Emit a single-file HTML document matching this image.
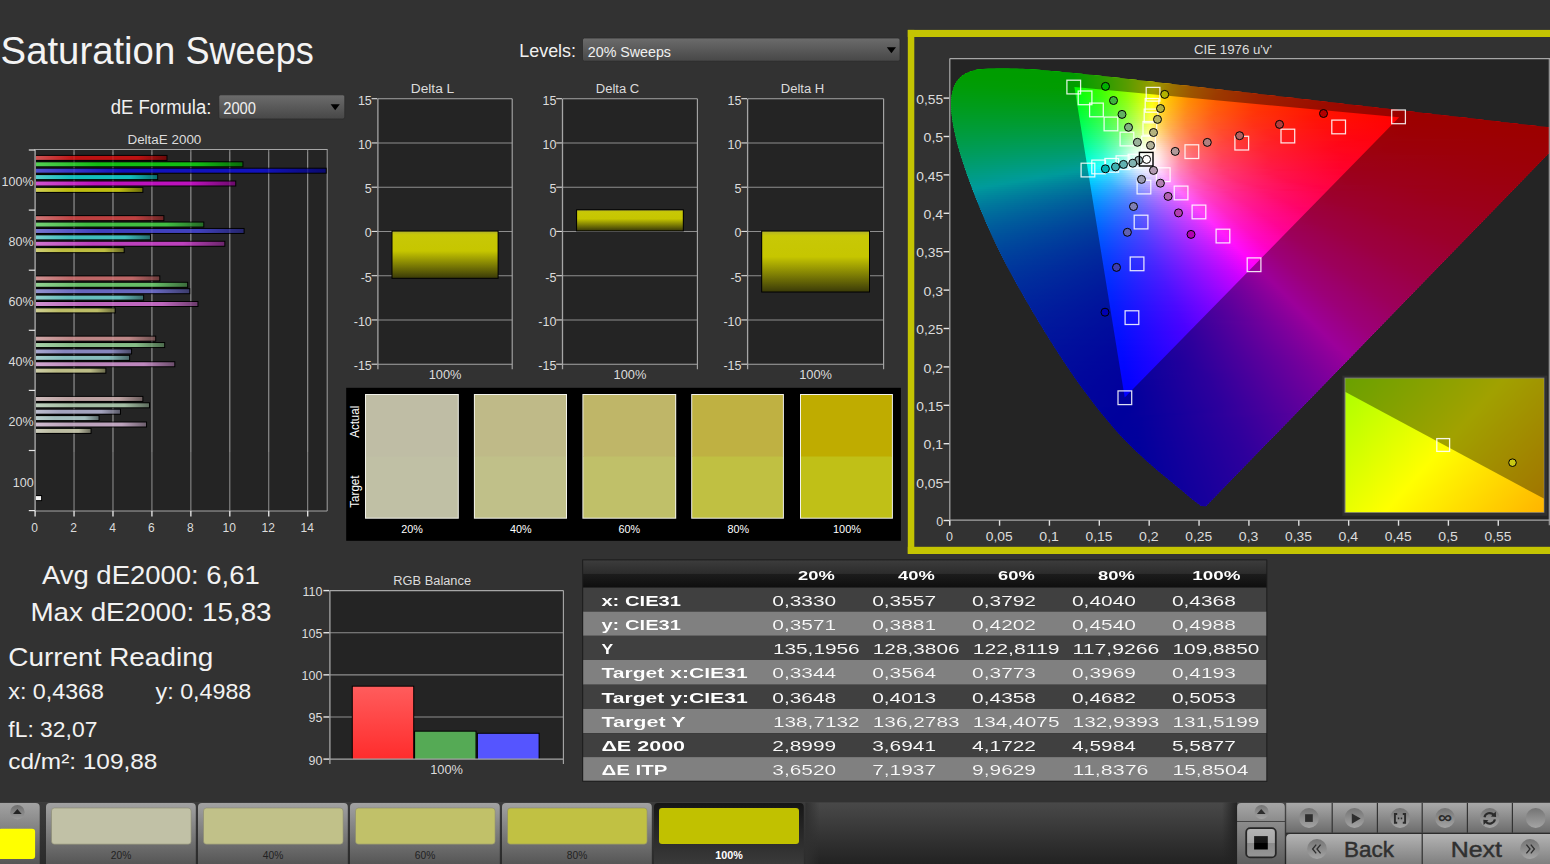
<!DOCTYPE html>
<html><head><meta charset="utf-8"><title>Saturation Sweeps</title>
<style>
html,body{margin:0;padding:0;background:#323232}
body{width:1550px;height:864px;overflow:hidden;position:relative;font-family:"Liberation Sans", sans-serif}
#plot{position:absolute;left:950px;top:59px;width:600px;height:461px;background:#242424;overflow:hidden}
#locus{position:absolute;left:0;top:0;width:100%;height:100%;clip-path:polygon(255.8px 447.2px,251.3px 446.9px,245.2px 442.5px,242.3px 440.3px,240.1px 438.4px,237.8px 436.4px,235.2px 434.2px,232.3px 431.8px,229.2px 429.2px,225.7px 426.4px,221.8px 423.1px,219.7px 421.4px,217.5px 419.6px,215.2px 417.7px,212.8px 415.8px,210.4px 413.8px,207.9px 411.7px,205.3px 409.4px,202.5px 407.1px,199.6px 404.6px,196.6px 401.9px,193.5px 399.1px,190.3px 396.1px,186.9px 393.0px,183.5px 389.8px,180.0px 386.3px,176.3px 382.6px,172.4px 378.5px,168.2px 373.9px,163.8px 368.9px,159.0px 363.3px,154.0px 357.3px,148.8px 350.9px,143.4px 343.9px,137.8px 336.6px,132.1px 328.9px,126.2px 320.7px,120.2px 312.0px,114.1px 302.9px,107.9px 293.4px,101.5px 283.5px,95.1px 273.2px,88.7px 262.7px,82.3px 251.9px,75.9px 241.0px,69.6px 230.0px,63.4px 218.9px,57.4px 207.8px,51.7px 196.7px,46.3px 185.7px,41.2px 174.9px,36.4px 164.2px,32.0px 153.8px,27.8px 143.7px,23.9px 134.0px,20.4px 124.6px,17.1px 115.6px,14.2px 107.1px,11.6px 99.1px,9.3px 91.5px,7.3px 84.4px,5.7px 77.8px,4.3px 71.6px,3.2px 65.9px,2.3px 60.5px,1.7px 55.6px,1.3px 51.0px,1.1px 46.7px,1.1px 42.8px,1.4px 39.1px,1.8px 35.6px,2.5px 32.5px,3.3px 29.6px,4.3px 26.9px,5.5px 24.4px,6.9px 22.2px,8.4px 20.2px,12.0px 16.8px,16.0px 14.2px,20.4px 12.4px,25.2px 11.1px,27.7px 10.6px,30.3px 10.2px,32.9px 10.0px,35.6px 9.7px,38.4px 9.6px,41.1px 9.4px,44.0px 9.4px,46.8px 9.3px,49.6px 9.3px,52.5px 9.3px,55.3px 9.3px,58.1px 9.3px,61.0px 9.4px,63.9px 9.5px,66.8px 9.5px,69.7px 9.7px,72.7px 9.8px,75.7px 10.0px,78.7px 10.1px,81.8px 10.3px,85.0px 10.6px,88.2px 10.8px,91.4px 11.0px,94.7px 11.3px,98.1px 11.6px,101.5px 11.9px,105.0px 12.2px,108.5px 12.5px,112.1px 12.9px,115.8px 13.2px,119.5px 13.6px,123.3px 14.0px,127.2px 14.4px,131.2px 14.8px,135.3px 15.2px,139.4px 15.7px,143.7px 16.1px,148.0px 16.6px,152.4px 17.1px,156.9px 17.6px,161.5px 18.1px,166.2px 18.6px,170.9px 19.1px,175.8px 19.7px,180.8px 20.3px,185.9px 20.8px,191.1px 21.4px,196.4px 22.0px,201.8px 22.6px,207.3px 23.3px,212.9px 23.9px,218.6px 24.6px,224.4px 25.2px,230.3px 25.9px,236.3px 26.6px,242.4px 27.3px,248.6px 28.0px,254.9px 28.7px,261.4px 29.5px,267.9px 30.2px,274.5px 31.0px,281.2px 31.8px,288.0px 32.6px,294.9px 33.3px,301.8px 34.1px,308.9px 34.9px,316.0px 35.8px,323.1px 36.6px,330.4px 37.4px,337.6px 38.3px,345.0px 39.1px,352.3px 39.9px,359.6px 40.8px,366.8px 41.6px,374.0px 42.5px,381.1px 43.3px,388.1px 44.1px,395.1px 44.9px,402.1px 45.7px,409.1px 46.5px,416.1px 47.3px,423.0px 48.1px,429.8px 48.9px,436.5px 49.6px,443.0px 50.4px,449.4px 51.1px,455.6px 51.8px,461.7px 52.5px,467.7px 53.2px,473.5px 53.9px,479.1px 54.5px,484.6px 55.2px,490.0px 55.8px,495.2px 56.4px,500.2px 57.0px,505.0px 57.5px,509.7px 58.1px,514.2px 58.6px,518.6px 59.1px,522.8px 59.6px,526.9px 60.0px,530.8px 60.5px,534.6px 60.9px,538.2px 61.3px,541.7px 61.7px,545.1px 62.1px,548.4px 62.5px,551.6px 62.9px,554.8px 63.2px,557.8px 63.6px,560.7px 63.9px,563.6px 64.3px,566.4px 64.6px,569.1px 64.9px,571.7px 65.2px,574.2px 65.5px,579.0px 66.0px,583.4px 66.5px,587.4px 67.0px,591.0px 67.4px,594.3px 67.8px,597.3px 68.1px,599.9px 68.4px,603.5px 68.8px,606.5px 69.2px,609.0px 69.5px,618.0px 70.5px,621.5px 70.9px)}
#locus i{position:absolute;left:0;width:100%;height:2.5px;display:block}
#ov{position:absolute;left:0;top:0}
#ov text{font-family:"Liberation Sans", sans-serif;white-space:pre}
</style></head><body>
<div id="plot"><div id="locus">
<i style="top:0px;background:linear-gradient(90deg,#00ff00 0px,#03ff00 122px,#3dff00 149px,#93ff00 178px,#f9ff00 205px,#fff400 209px,#ffb900 227px,#ff8500 251px,#ff5700 285px,#ff3000 336px,#ff1000 417px,#ff0000 519px,#ff0000 600px)"></i>
<i style="top:2px;background:linear-gradient(90deg,#00ff00 0px,#02ff00 122px,#3aff00 148px,#90ff00 177px,#f6ff00 204px,#fffb00 207px,#ffc000 224px,#ff8b00 247px,#ff5d00 279px,#ff3500 327px,#ff1400 402px,#ff0000 509px,#ff0000 600px)"></i>
<i style="top:4px;background:linear-gradient(90deg,#00ff00 0px,#02ff00 122px,#3aff00 148px,#90ff00 177px,#f7ff00 204px,#fffb00 207px,#ffbf00 224px,#ff8b00 247px,#ff5c00 279px,#ff3400 327px,#ff1400 402px,#ff0000 508px,#ff0000 600px)"></i>
<i style="top:6px;background:linear-gradient(90deg,#00ff00 0px,#03ff00 123px,#3cff00 149px,#94ff00 178px,#fffe00 206px,#ffc200 223px,#ff8c00 246px,#ff5d00 278px,#ff3500 325px,#ff1400 399px,#ff0000 505px,#ff0000 600px)"></i>
<i style="top:8px;background:linear-gradient(90deg,#00ff00 0px,#02ff00 123px,#3cff00 149px,#94ff00 178px,#fffd00 206px,#ffc100 223px,#ff8b00 246px,#ff5c00 278px,#ff3400 325px,#ff1400 399px,#ff0000 504px,#ff0000 600px)"></i>
<i style="top:10px;background:linear-gradient(90deg,#00ff00 0px,#02ff00 123px,#39ff00 148px,#90ff00 177px,#f5ff00 203px,#fffc00 206px,#ffc300 222px,#ff8e00 244px,#ff5f00 275px,#ff3600 321px,#ff1500 393px,#ff0000 499px,#ff0000 600px)"></i>
<i style="top:12px;background:linear-gradient(90deg,#00ff00 0px,#03ff00 124px,#3eff00 150px,#94ff00 178px,#faff00 204px,#fff700 207px,#ffbc00 224px,#ff8700 247px,#ff5a00 279px,#ff3200 327px,#ff1200 403px,#ff0000 504px,#ff0000 600px)"></i>
<i style="top:14px;background:linear-gradient(90deg,#00ff00 0px,#02ff00 124px,#3bff00 149px,#90ff00 177px,#f6ff00 203px,#fffb00 206px,#ffc100 222px,#ff8c00 244px,#ff5d00 275px,#ff3500 321px,#ff1400 393px,#ff0000 497px,#ff0000 600px)"></i>
<i style="top:16px;background:linear-gradient(90deg,#00ff01 0px,#02ff00 124px,#3aff00 149px,#90ff00 177px,#f7ff00 203px,#fffa00 206px,#ffc000 222px,#ff8b00 244px,#ff5d00 275px,#ff3500 321px,#ff1400 393px,#ff0000 496px,#ff0000 600px)"></i>
<i style="top:18px;background:linear-gradient(90deg,#00ff03 0px,#01ff00 124px,#37ff00 148px,#8dff00 176px,#f3ff00 202px,#fffd00 205px,#ffc200 221px,#ff8c00 243px,#ff5d00 274px,#ff3500 319px,#ff1400 390px,#ff0000 493px,#ff0000 600px)"></i>
<i style="top:20px;background:linear-gradient(90deg,#00ff05 0px,#00ff00 119px,#04ff00 126px,#3fff00 151px,#98ff00 179px,#fffd00 205px,#ffc100 221px,#ff8c00 243px,#ff5c00 274px,#ff3500 319px,#ff1400 390px,#ff0000 491px,#ff0000 600px)"></i>
<i style="top:22px;background:linear-gradient(90deg,#00ff08 0px,#00ff00 116px,#04ff00 126px,#3eff00 151px,#94ff00 178px,#f9ff00 203px,#fff700 206px,#ffbd00 222px,#ff8900 244px,#ff5b00 275px,#ff3300 321px,#ff1200 394px,#ff0000 492px,#ff0000 600px)"></i>
<i style="top:24px;background:linear-gradient(90deg,#00ff0b 0px,#02ff00 125px,#38ff00 149px,#8dff00 176px,#f1ff00 201px,#ffff00 204px,#ffc300 220px,#ff8e00 241px,#ff5f00 271px,#ff3600 315px,#ff1500 384px,#ff0000 486px,#ff0000 600px)"></i>
<i style="top:26px;background:linear-gradient(90deg,#00ff0d 0px,#03ff00 126px,#3bff00 150px,#91ff00 177px,#f6ff00 202px,#fffa00 205px,#ffbf00 221px,#ff8900 243px,#ff5a00 274px,#ff3200 320px,#ff1200 392px,#ff0000 489px,#ff0000 600px)"></i>
<i style="top:28px;background:linear-gradient(90deg,#00ff10 0px,#02ff01 126px,#3aff00 150px,#91ff00 177px,#f7ff00 202px,#fff900 205px,#ffbe00 221px,#ff8800 243px,#ff5a00 274px,#ff3200 320px,#ff1200 392px,#ff0000 488px,#ff0000 600px)"></i>
<i style="top:30px;background:linear-gradient(90deg,#00ff13 0px,#02ff04 126px,#3aff01 150px,#91ff00 177px,#f3ff00 201px,#fffd00 204px,#ffc300 219px,#ff8d00 240px,#ff5f00 269px,#ff3600 312px,#ff1500 379px,#ff0000 479px,#ff0000 600px)"></i>
<i style="top:32px;background:linear-gradient(90deg,#00ff16 0px,#03ff08 127px,#3cff04 151px,#94ff00 178px,#f9ff00 202px,#fff700 205px,#ffbc00 221px,#ff8700 243px,#ff5800 274px,#ff3000 320px,#ff1000 393px,#ff0000 485px,#ff0000 600px)"></i>
<i style="top:34px;background:linear-gradient(90deg,#00ff19 0px,#02ff0c 127px,#3cff08 151px,#91ff04 177px,#f5ff00 201px,#fffb00 204px,#ffc100 219px,#ff8c00 240px,#ff5d00 269px,#ff3500 312px,#ff1400 380px,#ff0000 477px,#ff0000 600px)"></i>
<i style="top:36px;background:linear-gradient(90deg,#00ff1d 0px,#02ff10 127px,#38ff0c 150px,#8dff08 176px,#f1ff04 200px,#ffff03 203px,#ffc400 218px,#ff8f00 238px,#ff6000 266px,#ff3700 308px,#ff1600 373px,#ff0000 472px,#ff0000 600px)"></i>
<i style="top:38px;background:linear-gradient(90deg,#00ff20 0px,#03ff14 128px,#3eff10 152px,#95ff0c 178px,#fffe08 203px,#ffc304 218px,#ff8e00 238px,#ff5f00 266px,#ff3700 308px,#ff1600 373px,#ff0000 471px,#ff0000 600px)"></i>
<i style="top:40px;background:linear-gradient(90deg,#00ff23 0px,#02ff18 128px,#3aff15 151px,#91ff11 177px,#fffd0d 203px,#ffc208 218px,#ff8d03 238px,#ff5f00 266px,#ff3600 308px,#ff1500 374px,#ff0000 470px,#ff0000 600px)"></i>
<i style="top:42px;background:linear-gradient(90deg,#00ff26 0px,#02ff1c 128px,#3aff1a 151px,#91ff16 177px,#fffc12 203px,#ffc10c 218px,#ff8c06 238px,#ff5e02 266px,#ff3500 308px,#ff1400 374px,#ff0000 469px,#ff0000 600px)"></i>
<i style="top:44px;background:linear-gradient(90deg,#00ff2a 0px,#03ff21 129px,#3cff1e 152px,#91ff1c 177px,#f4ff18 200px,#fffb18 203px,#ffc010 218px,#ff8b0a 238px,#ff5d04 266px,#ff3500 308px,#ff1400 374px,#ff0000 468px,#ff0000 600px)"></i>
<i style="top:46px;background:linear-gradient(90deg,#00ff2d 0px,#02ff26 129px,#3cff23 152px,#91ff21 177px,#f5ff1e 200px,#ffff1e 202px,#ffc215 217px,#ff8d0d 237px,#ff5e07 265px,#ff3602 306px,#ff1400 371px,#ff0000 465px,#ff0000 600px)"></i>
<i style="top:48px;background:linear-gradient(90deg,#00ff31 0px,#02ff2a 129px,#39ff29 151px,#8dff27 176px,#f1ff25 199px,#fffe24 202px,#ffc51a 216px,#ff9012 235px,#ff610a 262px,#ff3804 302px,#ff1700 364px,#ff0000 459px,#ff0000 600px)"></i>
<i style="top:50px;background:linear-gradient(90deg,#00ff35 0px,#01ff2f 129px,#38ff2e 151px,#8eff2c 176px,#f2ff2b 199px,#fffd2a 202px,#ffc41f 216px,#ff8f16 235px,#ff600d 262px,#ff3706 302px,#ff1600 364px,#ff0000 458px,#ff0000 600px)"></i>
<i style="top:52px;background:linear-gradient(90deg,#00ff38 0px,#03ff34 130px,#3bff33 152px,#92ff32 177px,#f8ff32 200px,#fff730 203px,#ffbc23 218px,#ff8818 238px,#ff5a0f 266px,#ff3207 308px,#ff1201 374px,#ff0000 463px,#ff0000 600px)"></i>
<i style="top:54px;background:linear-gradient(90deg,#00ff3c 0px,#02ff39 130px,#3aff39 152px,#8eff39 176px,#f4ff39 199px,#fffb38 202px,#ffbe29 217px,#ff891d 237px,#ff5a12 265px,#ff3309 306px,#ff1302 371px,#ff0000 460px,#ff0000 600px)"></i>
<i style="top:56px;background:linear-gradient(90deg,#00ff40 0px,#01ff3f 130px,#37ff3f 151px,#8aff3f 175px,#f5ff40 199px,#ffff40 201px,#ffc130 216px,#ff8c22 235px,#ff5d16 262px,#ff350c 302px,#ff1404 365px,#ff0000 455px,#ff0000 600px)"></i>
<i style="top:58px;background:linear-gradient(90deg,#00ff44 0px,#03ff44 131px,#3cff44 153px,#92ff46 177px,#fffe48 201px,#ffc336 215px,#ff8e27 234px,#ff5f1a 260px,#ff370f 299px,#ff1606 360px,#ff0000 451px,#ff0000 600px)"></i>
<i style="top:60px;background:linear-gradient(90deg,#00ff48 0px,#02ff4a 131px,#39ff4a 152px,#8bff4d 175px,#fffd50 201px,#ffbf3b 216px,#ff8a2a 235px,#ff5c1c 262px,#ff3411 302px,#ff1307 365px,#ff0001 453px,#ff0000 600px)"></i>
<i style="top:62px;background:linear-gradient(90deg,#00ff4c 0px,#02ff4f 131px,#38ff50 152px,#8bff54 175px,#fffd59 201px,#ffbf42 216px,#ff8a2f 235px,#ff5b20 262px,#ff3313 302px,#ff1309 365px,#ff0002 451px,#ff0000 600px)"></i>
<i style="top:64px;background:linear-gradient(90deg,#00ff50 0px,#03ff55 132px,#3bff57 153px,#8cff5b 175px,#fdff63 200px,#ffb746 218px,#ff8432 237px,#ff5722 264px,#ff3015 305px,#ff110a 370px,#ff0003 453px,#ff0000 600px)"></i>
<i style="top:66px;background:linear-gradient(90deg,#00ff54 0px,#02ff5b 132px,#3aff5d 153px,#88ff63 174px,#feff6d 200px,#ffba4e 217px,#ff8537 236px,#ff5826 263px,#ff3017 304px,#ff110c 368px,#ff0004 450px,#ff0000 600px)"></i>
<i style="top:68px;background:linear-gradient(90deg,#00ff58 0px,#02ff61 132px,#37ff64 152px,#85ff6a 173px,#ffff78 200px,#ffba55 217px,#ff853c 236px,#ff5729 263px,#ff301a 304px,#ff100d 369px,#ff0005 450px,#ff0000 600px)"></i>
<i style="top:70px;background:linear-gradient(90deg,#00ff5c 0px,#03ff68 133px,#39ff6b 153px,#86ff72 173px,#fbff83 199px,#ffec7a 204px,#ffa652 223px,#ff773b 242px,#ff4b28 272px,#ff2619 318px,#ff090c 392px,#ff0006 459px,#ff0000 600px)"></i>
<i style="top:72px;background:linear-gradient(90deg,#00ff60 0px,#02ff6e 133px,#39ff71 153px,#82ff7a 172px,#f8ff8f 198px,#fff98c 201px,#ffa95a 222px,#ff7840 241px,#ff4d2d 270px,#ff271c 315px,#ff0a0e 387px,#ff0007 455px,#ff0000 600px)"></i>
<i style="top:74px;background:linear-gradient(90deg,#00ff65 0px,#02ff74 133px,#35ff78 152px,#7bff81 170px,#f5ff9b 197px,#fffc9a 200px,#ffa25d 224px,#ff7644 242px,#ff4b2f 271px,#ff261e 316px,#ff090f 389px,#ff0008 455px,#ff0001 600px)"></i>
<i style="top:76px;background:linear-gradient(90deg,#00ff69 0px,#01ff7b 133px,#35ff7f 152px,#77ff88 169px,#eaffa7 194px,#fffca6 200px,#ff9c5f 226px,#ff7146 244px,#ff4731 274px,#ff221f 321px,#ff0610 397px,#ff0009 462px,#ff0001 600px)"></i>
<i style="top:78px;background:linear-gradient(90deg,#00ff6e 0px,#02ff82 134px,#38ff87 153px,#78ff91 169px,#e0ffb0 191px,#ffffb5 199px,#ff9964 227px,#ff6e4a 245px,#ff4433 276px,#ff2020 324px,#ff0510 402px,#ff0009 475px,#ff0002 600px)"></i>
<i style="top:80px;background:linear-gradient(90deg,#00ff72 0px,#02ff89 134px,#34ff8e 152px,#75ff98 168px,#dbffba 189px,#fffec1 199px,#ffc48f 215px,#ff9266 229px,#ff6a4c 247px,#ff4035 279px,#ff1d21 329px,#ff0311 410px,#ff0003 600px)"></i>
<i style="top:82px;background:linear-gradient(90deg,#00ff77 0px,#01ff90 134px,#34ff95 152px,#71ffa0 167px,#dbffc4 188px,#fffecc 199px,#ffd1a3 212px,#ff9871 227px,#ff7055 243px,#ff463c 272px,#ff2227 318px,#ff0615 392px,#ff000d 455px,#ff0003 600px)"></i>
<i style="top:84px;background:linear-gradient(90deg,#00ff7b 0px,#03ff97 135px,#37ff9e 153px,#72ffa8 167px,#d6ffcb 186px,#feffd8 198px,#ffe2bd 208px,#ff9877 227px,#ff715b 242px,#ff4841 270px,#ff232a 315px,#ff0717 388px,#ff000f 450px,#ff0004 600px)"></i>
<i style="top:86px;background:linear-gradient(90deg,#00ff80 0px,#00ff9e 134px,#2fffa5 151px,#69ffae 165px,#d5ffd2 185px,#f7ffe0 195px,#fffbde 200px,#ffd9bb 211px,#ff987e 227px,#ff7060 242px,#ff4745 270px,#ff232d 315px,#ff0619 388px,#ff0010 450px,#ff0005 600px)"></i>
<i style="top:88px;background:linear-gradient(90deg,#00ff85 0px,#00ffa4 130px,#03ffa6 136px,#36ffad 153px,#6fffb8 166px,#d9ffdb 185px,#f6ffe8 194px,#fffbe6 200px,#ffdfc8 210px,#ff9884 227px,#ff7166 241px,#ff4a4b 267px,#ff2531 310px,#ff081c 380px,#ff0012 442px,#ff0006 600px)"></i>
<i style="top:90px;background:linear-gradient(90deg,#00ff8a 0px,#00ffaa 126px,#03ffae 136px,#35ffb6 153px,#70ffc1 166px,#d8ffe1 184px,#f6ffee 193px,#fffbed 200px,#ffe0d0 210px,#ff988b 227px,#ff706b 241px,#ff494e 267px,#ff2434 310px,#ff081e 380px,#ff0014 441px,#ff0006 600px)"></i>
<i style="top:92px;background:linear-gradient(90deg,#00ff8e 0px,#00ffb0 122px,#02ffb5 136px,#31ffbd 152px,#6bffc8 165px,#dbffe8 184px,#f6fff3 192px,#fffcf2 200px,#ffe6db 209px,#ff948e 228px,#ff6d6e 242px,#ff4650 269px,#ff2135 314px,#ff061e 386px,#ff0014 448px,#ff0007 600px)"></i>
<i style="top:94px;background:linear-gradient(90deg,#00ff93 0px,#00ffb6 118px,#01ffbd 136px,#31ffc6 152px,#66ffcf 164px,#ddffee 184px,#f7fff7 192px,#fffcf6 200px,#ffe7e1 209px,#ff9091 229px,#ff6b72 243px,#ff4352 271px,#ff1f36 317px,#ff041f 391px,#ff0012 476px,#ff0008 600px)"></i>
<i style="top:96px;background:linear-gradient(90deg,#00ff98 0px,#00ffbc 115px,#03ffc6 137px,#34ffcf 153px,#6cffd9 165px,#dafff1 183px,#f4fff9 190px,#fffcf9 200px,#ffe8e5 209px,#ff8c93 230px,#ff6875 244px,#ff4054 273px,#ff1d37 320px,#ff0320 396px,#ff000b 570px,#ff0009 600px)"></i>
<i style="top:98px;background:linear-gradient(90deg,#00ff9e 0px,#00ffc2 112px,#02ffce 137px,#33ffd8 153px,#6cffe2 165px,#dbfff6 183px,#f5fffc 190px,#fffcfc 200px,#ffe8e9 209px,#ff8b99 230px,#ff677a 244px,#ff4059 272px,#ff1d3a 319px,#ff0322 394px,#ff000c 561px,#ff0009 600px)"></i>
<i style="top:100px;background:linear-gradient(90deg,#00ffa3 0px,#00ffc8 109px,#02ffd6 137px,#2fffe0 152px,#66ffea 164px,#dbfffb 183px,#f5fffe 190px,#fffcfd 200px,#ffe8ed 209px,#ff8a9e 230px,#ff667f 244px,#ff3f5d 272px,#ff1c3d 319px,#ff0223 394px,#ff000d 557px,#ff000a 600px)"></i>
<i style="top:102px;background:linear-gradient(90deg,#00ffa8 0px,#00ffce 106px,#03ffe0 138px,#32ffea 153px,#6bfff3 165px,#dafeff 183px,#f5fdff 191px,#fff9fd 202px,#ffdfe9 211px,#ff89a4 230px,#ff6584 244px,#ff3d5f 273px,#ff1b3f 320px,#ff0225 396px,#ff000e 557px,#ff000b 600px)"></i>
<i style="top:104px;background:linear-gradient(90deg,#00ffad 0px,#00ffd4 103px,#02ffe8 138px,#31fff3 153px,#6afffd 165px,#daf9ff 184px,#f4faff 192px,#fff6fe 203px,#ffd9e9 212px,#ff8bac 229px,#ff658b 243px,#ff3e65 271px,#ff1c43 317px,#ff0228 391px,#ff0010 543px,#ff000c 600px)"></i>
<i style="top:106px;background:linear-gradient(90deg,#00ffb3 0px,#00ffdb 101px,#02fff1 138px,#31fffc 153px,#6cf8ff 166px,#d5f4ff 184px,#f0f7ff 192px,#fff2ff 204px,#ffcde6 214px,#ff8ab2 229px,#ff6490 243px,#ff3d69 271px,#ff1b46 317px,#ff0229 391px,#ff0012 539px,#ff000d 600px)"></i>
<i style="top:108px;background:linear-gradient(90deg,#00ffb8 0px,#00ffe1 98px,#01fffa 138px,#36f7ff 155px,#72eeff 168px,#d3efff 185px,#edf2ff 193px,#feecff 205px,#ffcaea 214px,#ff88b7 229px,#ff6395 243px,#ff3d6d 271px,#ff1a49 317px,#ff012b 391px,#ff0013 536px,#ff000e 600px)"></i>
<i style="top:110px;background:linear-gradient(90deg,#00ffbe 0px,#00ffe7 96px,#00fcff 136px,#07f8ff 141px,#3febff 158px,#7ee5ff 171px,#d1e9ff 186px,#ebedff 195px,#fde2ff 207px,#ffb9e5 217px,#ff80b7 231px,#ff5b93 247px,#ff356a 278px,#ff1445 328px,#ff002a 401px,#ff0012 553px,#ff000e 600px)"></i>
<i style="top:112px;background:linear-gradient(90deg,#00ffc3 0px,#00ffed 93px,#00fcff 124px,#02f1ff 139px,#34e4ff 156px,#6edeff 169px,#c9e3ff 186px,#e5e7ff 195px,#f8dbff 207px,#ffd0fc 211px,#ff84c2 229px,#ff5f9d 244px,#ff3973 273px,#ff184d 319px,#ff002e 394px,#ff0015 536px,#ff000f 600px)"></i>
<i style="top:114px;background:linear-gradient(90deg,#00ffc9 0px,#00fff4 91px,#00fcff 113px,#03e8ff 140px,#39dbff 158px,#78d5ff 172px,#c4dcff 187px,#e2deff 197px,#f7ceff 209px,#ffc3fc 213px,#ff82c8 229px,#ff5ca1 245px,#ff3775 274px,#ff1750 319px,#ff0030 393px,#ff0017 531px,#ff0010 600px)"></i>
<i style="top:116px;background:linear-gradient(90deg,#00ffcf 0px,#00fffa 89px,#00f7ff 107px,#02e0ff 140px,#36d3ff 158px,#77ceff 173px,#bfd5ff 188px,#ded5ff 199px,#fcbdff 213px,#ff7ac8 231px,#ff559e 249px,#ff3173 280px,#ff134d 328px,#ff0031 397px,#ff0017 536px,#ff0011 600px)"></i>
<i style="top:118px;background:linear-gradient(90deg,#00ffd4 0px,#00fcff 88px,#02d9ff 140px,#37cbff 159px,#76c7ff 174px,#bacdff 189px,#dcc8ff 202px,#ffaeff 216px,#ff79ce 231px,#ff52a1 250px,#ff2f75 281px,#ff124f 329px,#ff0032 397px,#ff0019 533px,#ff0012 600px)"></i>
<i style="top:120px;background:linear-gradient(90deg,#00ffda 0px,#00fcff 77px,#03d1ff 141px,#38c4ff 160px,#7dc0ff 177px,#bbc4ff 192px,#dbbbff 205px,#ffa2ff 218px,#ff72ce 233px,#ff4b9f 254px,#ff2a74 286px,#ff0e4e 336px,#ff0034 399px,#ff001a 534px,#ff0013 600px)"></i>
<i style="top:122px;background:linear-gradient(90deg,#00ffe0 0px,#00fcff 65px,#02caff 141px,#38bdff 161px,#88b9ff 181px,#bbbbff 195px,#e0a9ff 210px,#ff98ff 220px,#ff6bcf 235px,#ff469f 257px,#ff2673 290px,#ff0c4d 341px,#ff0035 400px,#ff001b 534px,#ff0014 600px)"></i>
<i style="top:124px;background:linear-gradient(90deg,#00ffe6 0px,#00fcff 53px,#02c3ff 141px,#36b6ff 161px,#9cb2ff 188px,#caaaff 204px,#ff8eff 222px,#ff64cd 238px,#ff3f9b 262px,#ff2170 297px,#ff084b 351px,#ff0036 404px,#ff001b 539px,#ff0015 600px)"></i>
<i style="top:126px;background:linear-gradient(90deg,#00ffec 0px,#00fcff 41px,#03bcff 142px,#39afff 163px,#ada8ff 196px,#f589ff 221px,#ff82fb 225px,#ff59c6 243px,#ff3795 269px,#ff1a6a 307px,#ff0346 366px,#ff0028 466px,#ff0015 600px)"></i>
<i style="top:128px;background:linear-gradient(90deg,#00fff3 0px,#00fbff 30px,#02b7ff 142px,#3aa9ff 164px,#ab9eff 198px,#f581ff 223px,#ff7afb 227px,#ff53c4 246px,#ff3395 272px,#ff176a 311px,#ff0246 371px,#ff0028 474px,#ff0016 600px)"></i>
<i style="top:130px;background:linear-gradient(90deg,#00fff9 0px,#00f9ff 22px,#01b1ff 142px,#3aa2ff 165px,#af93ff 202px,#fc77ff 227px,#ff64e5 236px,#ff41b0 258px,#ff2483 289px,#ff0b5a 336px,#ff003f 392px,#ff0023 510px,#ff0017 600px)"></i>
<i style="top:132px;background:linear-gradient(90deg,#00ffff 0px,#03abff 143px,#3d9cff 167px,#b089ff 205px,#ff70ff 230px,#ff4cc9 249px,#ff2d97 276px,#ff146d 315px,#ff0048 376px,#ff0029 479px,#ff0018 600px)"></i>
<i style="top:134px;background:linear-gradient(90deg,#00f9ff 0px,#02a6ff 143px,#3d96ff 168px,#b380ff 208px,#ff6aff 232px,#ff47c7 252px,#ff2996 280px,#ff106b 321px,#ff0047 382px,#ff0029 488px,#ff0019 600px)"></i>
<i style="top:136px;background:linear-gradient(90deg,#00f2ff 0px,#01a0ff 143px,#3d91ff 169px,#b976ff 212px,#ff64ff 234px,#ff43c8 254px,#ff2797 282px,#ff0f6c 323px,#ff0049 382px,#ff002b 486px,#ff001a 600px)"></i>
<i style="top:138px;background:linear-gradient(90deg,#00edff 0px,#029bff 144px,#438aff 172px,#cc6bff 220px,#ff5fff 236px,#ff3fc9 256px,#ff2498 284px,#ff0d6d 325px,#ff004c 381px,#ff002d 483px,#ff001b 600px)"></i>
<i style="top:140px;background:linear-gradient(90deg,#00e7ff 0px,#0296ff 144px,#4385ff 173px,#dc62ff 227px,#ff58fc 239px,#ff3ac5 260px,#ff2095 289px,#ff0a6b 332px,#ff004d 383px,#ff002d 485px,#ff001c 600px)"></i>
<i style="top:142px;background:linear-gradient(90deg,#00e2ff 0px,#0391ff 145px,#4680ff 175px,#d65eff 227px,#ff53fc 241px,#ff36c6 262px,#ff1d95 292px,#ff086a 336px,#ff004e 384px,#ff002f 485px,#ff001d 600px)"></i>
<i style="top:144px;background:linear-gradient(90deg,#00dcff 0px,#028dff 145px,#467bff 176px,#d15aff 227px,#ff4ffc 243px,#ff32c5 265px,#ff1a94 296px,#ff0669 341px,#ff004e 390px,#ff002e 494px,#ff001e 600px)"></i>
<i style="top:146px;background:linear-gradient(90deg,#00d7ff 0px,#0289ff 145px,#4676ff 177px,#cc57ff 227px,#ff4afc 245px,#ff2fc6 267px,#ff1895 298px,#ff056b 343px,#ff004c 399px,#ff002d 508px,#ff001f 600px)"></i>
<i style="top:148px;background:linear-gradient(90deg,#00d2ff 0px,#0385ff 146px,#4871ff 179px,#cc53ff 229px,#ff46fc 247px,#ff2bc5 270px,#ff1594 302px,#ff0269 349px,#ff0045 422px,#ff0027 547px,#ff0020 600px)"></i>
<i style="top:150px;background:linear-gradient(90deg,#00ceff 0px,#0281ff 146px,#486dff 180px,#ca4fff 230px,#ff42fc 249px,#ff29c5 272px,#ff1395 304px,#ff026a 351px,#ff0046 424px,#ff0028 548px,#ff0021 600px)"></i>
<i style="top:152px;background:linear-gradient(90deg,#00c9ff 0px,#027dff 146px,#466aff 180px,#c64cff 230px,#ff3ffc 251px,#ff26c6 274px,#ff1195 307px,#ff006a 355px,#ff0046 430px,#ff0028 557px,#ff0022 600px)"></i>
<i style="top:154px;background:linear-gradient(90deg,#00c4ff 0px,#0379ff 147px,#4b65ff 183px,#cc47ff 234px,#ff3bfc 253px,#ff23c5 277px,#ff0e95 310px,#ff006a 359px,#ff0045 435px,#ff0027 565px,#ff0023 600px)"></i>
<i style="top:156px;background:linear-gradient(90deg,#00c0ff 0px,#0276ff 147px,#4962ff 183px,#c744ff 234px,#ff37fc 255px,#ff20c6 279px,#ff0c94 313px,#ff006a 363px,#ff0045 441px,#ff0027 573px,#ff0024 600px)"></i>
<i style="top:158px;background:linear-gradient(90deg,#00bcff 0px,#0272ff 147px,#475fff 183px,#c541ff 235px,#ff34fc 257px,#ff1ec6 281px,#ff0b96 315px,#ff006c 363px,#ff0047 440px,#ff0029 570px,#ff0024 600px)"></i>
<i style="top:160px;background:linear-gradient(90deg,#00b8ff 0px,#036fff 148px,#495bff 185px,#c93dff 238px,#ff31fc 259px,#ff1bc5 284px,#ff0994 319px,#ff006e 364px,#ff0049 440px,#ff002a 568px,#ff0025 600px)"></i>
<i style="top:162px;background:linear-gradient(90deg,#00b4ff 0px,#026cff 148px,#4758ff 185px,#c43bff 238px,#ff2dfd 261px,#ff19c6 286px,#ff0795 321px,#ff0070 364px,#ff004b 439px,#ff002c 565px,#ff0026 600px)"></i>
<i style="top:164px;background:linear-gradient(90deg,#00b0ff 0px,#0368ff 149px,#4c54ff 188px,#ca36ff 242px,#ff2afd 263px,#ff16c5 289px,#ff0594 325px,#ff006e 370px,#ff0049 448px,#ff002b 579px,#ff0027 600px)"></i>
<i style="top:166px;background:linear-gradient(90deg,#00acff 0px,#0365ff 149px,#4a51ff 188px,#c834ff 243px,#ff27fd 265px,#ff14c6 291px,#ff0495 327px,#ff006a 380px,#ff0046 463px,#ff0028 600px)"></i>
<i style="top:168px;background:linear-gradient(90deg,#00a9ff 0px,#0262ff 149px,#484fff 188px,#c731ff 244px,#ff25fd 267px,#ff12c6 293px,#ff0395 330px,#ff006a 384px,#ff0046 468px,#ff0029 600px)"></i>
<i style="top:170px;background:linear-gradient(90deg,#00a5ff 0px,#035fff 150px,#4c4bff 191px,#cc2dff 248px,#ff22fd 269px,#ff10c5 296px,#ff0195 333px,#ff006a 388px,#ff0046 474px,#ff002a 600px)"></i>
<i style="top:172px;background:linear-gradient(90deg,#00a2ff 0px,#025dff 150px,#4a48ff 191px,#cb2bff 249px,#ff1ffd 271px,#ff0ec6 298px,#ff0095 336px,#ff006a 392px,#ff0045 479px,#ff002b 600px)"></i>
<i style="top:174px;background:linear-gradient(90deg,#009eff 0px,#025aff 150px,#4946ff 191px,#c729ff 249px,#ff1dfd 273px,#ff0cc7 300px,#ff0096 338px,#ff006b 394px,#ff0046 481px,#ff002c 600px)"></i>
<i style="top:176px;background:linear-gradient(90deg,#009bff 0px,#0357ff 151px,#4b43ff 193px,#ca26ff 252px,#ff1afd 275px,#ff0ac6 303px,#ff0095 342px,#ff006a 399px,#ff0046 488px,#ff002d 600px)"></i>
<i style="top:178px;background:linear-gradient(90deg,#0098ff 0px,#0255ff 151px,#4941ff 193px,#c824ff 253px,#ff18fd 277px,#ff08c6 305px,#ff0096 344px,#ff006b 401px,#ff0047 490px,#ff002e 600px)"></i>
<i style="top:180px;background:linear-gradient(90deg,#0095ff 0px,#0253ff 151px,#473fff 193px,#c622ff 254px,#ff16fd 279px,#ff07c5 308px,#ff0096 346px,#ff006b 404px,#ff0047 494px,#ff002f 600px)"></i>
<i style="top:182px;background:linear-gradient(90deg,#0092ff 0px,#0350ff 152px,#4b3cff 196px,#cc1eff 258px,#ff13fd 281px,#ff05c6 310px,#ff0095 350px,#ff006b 409px,#ff0046 501px,#ff0030 600px)"></i>
<i style="top:184px;background:linear-gradient(90deg,#008fff 0px,#024eff 152px,#493aff 196px,#c81dff 258px,#ff11fd 283px,#ff04c7 312px,#ff0095 353px,#ff006a 413px,#ff0046 506px,#ff0032 600px)"></i>
<i style="top:186px;background:linear-gradient(90deg,#008cff 0px,#024cff 152px,#4838ff 196px,#c61bff 259px,#ff0ffd 285px,#ff02c6 315px,#ff0094 357px,#ff006a 418px,#ff0046 513px,#ff0033 600px)"></i>
<i style="top:188px;background:linear-gradient(90deg,#0089ff 0px,#0349ff 153px,#4c35ff 199px,#cb18ff 263px,#ff0dfd 287px,#ff01c6 317px,#ff0095 359px,#ff006a 421px,#ff0046 517px,#ff0034 600px)"></i>
<i style="top:190px;background:linear-gradient(90deg,#0087ff 0px,#0247ff 153px,#4a33ff 199px,#ca16ff 264px,#ff0bfd 289px,#ff00c7 319px,#ff0096 361px,#ff006b 423px,#ff0047 519px,#ff0035 600px)"></i>
<i style="top:192px;background:linear-gradient(90deg,#0084ff 0px,#0345ff 154px,#4c31ff 201px,#cc14ff 267px,#ff0afd 291px,#ff00c6 322px,#ff0095 365px,#ff006a 428px,#ff0046 526px,#ff0036 600px)"></i>
<i style="top:194px;background:linear-gradient(90deg,#0082ff 0px,#0343ff 154px,#4a2fff 201px,#c913ff 267px,#ff08fd 293px,#ff00c6 324px,#ff0096 367px,#ff006b 430px,#ff0046 529px,#ff0037 600px)"></i>
<i style="top:196px;background:linear-gradient(90deg,#007fff 0px,#0241ff 154px,#492dff 201px,#c711ff 268px,#ff06fd 295px,#ff00c7 326px,#ff0096 370px,#ff006b 434px,#ff0046 534px,#ff0038 600px)"></i>
<i style="top:198px;background:linear-gradient(90deg,#007dff 0px,#033fff 155px,#4c2bff 204px,#cc0eff 272px,#ff05fd 297px,#ff00c6 329px,#ff0095 374px,#ff006a 440px,#ff0045 543px,#ff0039 600px)"></i>
<i style="top:200px;background:linear-gradient(90deg,#007aff 0px,#033dff 155px,#4b29ff 204px,#ca0dff 273px,#ff03fd 299px,#ff00c7 331px,#ff0096 376px,#ff006b 442px,#ff0046 545px,#ff003a 600px)"></i>
<i style="top:202px;background:linear-gradient(90deg,#0078ff 0px,#023cff 155px,#4928ff 204px,#c90cff 274px,#ff02fd 301px,#ff00c6 334px,#ff0095 380px,#ff006a 447px,#ff0046 552px,#ff003b 600px)"></i>
<i style="top:204px;background:linear-gradient(90deg,#0076ff 0px,#033aff 156px,#4b26ff 206px,#ca0aff 276px,#ff01fe 303px,#ff00c6 336px,#ff0095 382px,#ff006a 450px,#ff0046 556px,#ff003c 600px)"></i>
<i style="top:206px;background:linear-gradient(90deg,#0073ff 0px,#0238ff 156px,#4924ff 206px,#c809ff 277px,#ff00fe 305px,#ff00c7 338px,#ff0095 385px,#ff006b 453px,#ff0046 559px,#ff003d 600px)"></i>
<i style="top:208px;background:linear-gradient(90deg,#0071ff 0px,#0237ff 156px,#4823ff 206px,#c708ff 278px,#ff00fe 307px,#ff00c6 341px,#ff0095 388px,#ff006b 457px,#ff0046 565px,#ff003e 600px)"></i>
<i style="top:210px;background:linear-gradient(90deg,#006fff 0px,#0335ff 157px,#4b21ff 209px,#cb05ff 282px,#ff00fe 309px,#ff00c7 343px,#ff0095 391px,#ff006a 461px,#ff0046 570px,#ff003f 600px)"></i>
<i style="top:212px;background:linear-gradient(90deg,#006dff 0px,#0233ff 157px,#4a1fff 209px,#ca04ff 283px,#ff00fe 311px,#ff00c7 345px,#ff0096 393px,#ff006b 463px,#ff0047 572px,#ff0040 600px)"></i>
<i style="top:214px;background:linear-gradient(90deg,#006bff 0px,#0331ff 158px,#4b1eff 211px,#cc03ff 286px,#ff00fe 313px,#ff00c6 348px,#ff0095 397px,#ff006a 469px,#ff0046 581px,#ff0041 600px)"></i>
<i style="top:216px;background:linear-gradient(90deg,#0069ff 0px,#0330ff 158px,#4c1cff 212px,#cb02ff 287px,#ff00fc 316px,#ff00c4 352px,#ff0093 402px,#ff0069 475px,#ff0045 590px,#ff0042 600px)"></i>
<i style="top:218px;background:linear-gradient(90deg,#0067ff 0px,#022fff 158px,#4a1bff 212px,#ca01ff 288px,#ff00fc 318px,#ff00c5 354px,#ff0094 404px,#ff0069 478px,#ff0045 593px,#ff0044 600px)"></i>
<i style="top:220px;background:linear-gradient(90deg,#0065ff 0px,#032dff 159px,#4c19ff 214px,#cc00ff 291px,#ff00fc 320px,#ff00c5 356px,#ff0094 407px,#ff0069 482px,#ff0045 599px,#ff0045 600px)"></i>
<i style="top:222px;background:linear-gradient(90deg,#0063ff 0px,#032cff 159px,#4a18ff 214px,#cb00ff 292px,#ff00fc 322px,#ff00c5 359px,#ff0093 411px,#ff0069 487px,#ff0046 600px)"></i>
<i style="top:224px;background:linear-gradient(90deg,#0062ff 0px,#022bff 159px,#4917ff 214px,#c800ff 292px,#ff00fc 324px,#ff00c5 361px,#ff0094 413px,#ff0069 489px,#ff0047 600px)"></i>
<i style="top:226px;background:linear-gradient(90deg,#0060ff 0px,#0329ff 160px,#4c15ff 217px,#c800ff 294px,#ff00fc 326px,#ff00c6 363px,#ff0095 415px,#ff006a 492px,#ff0048 600px)"></i>
<i style="top:228px;background:linear-gradient(90deg,#005eff 0px,#0328ff 160px,#4b14ff 217px,#c200ff 292px,#ff00fc 328px,#ff00c5 366px,#ff0094 419px,#ff0069 497px,#ff0049 600px)"></i>
<i style="top:230px;background:linear-gradient(90deg,#005cff 0px,#0227ff 160px,#4913ff 217px,#bd00ff 291px,#ff00fc 330px,#ff00c5 368px,#ff0095 421px,#ff006a 499px,#ff004a 600px)"></i>
<i style="top:232px;background:linear-gradient(90deg,#005bff 0px,#0325ff 161px,#4b12ff 219px,#b700ff 289px,#ff00fc 332px,#ff00c5 371px,#ff0094 425px,#ff0069 504px,#ff004b 600px)"></i>
<i style="top:234px;background:linear-gradient(90deg,#0059ff 0px,#0324ff 161px,#4a11ff 219px,#b100ff 287px,#ff00fc 334px,#ff00c5 373px,#ff0094 428px,#ff0069 508px,#ff004c 600px)"></i>
<i style="top:236px;background:linear-gradient(90deg,#0057ff 0px,#0223ff 161px,#4810ff 219px,#ad00ff 286px,#ff00fc 336px,#ff00c5 375px,#ff0094 430px,#ff0069 511px,#ff004e 600px)"></i>
<i style="top:238px;background:linear-gradient(90deg,#0056ff 0px,#0322ff 162px,#4b0eff 222px,#a900ff 285px,#ff00fc 338px,#ff00c5 378px,#ff0094 434px,#ff0069 516px,#ff004f 600px)"></i>
<i style="top:240px;background:linear-gradient(90deg,#0054ff 0px,#0221ff 162px,#4a0eff 222px,#a300ff 283px,#ff00fc 340px,#ff00c5 380px,#ff0094 436px,#ff006a 518px,#ff0050 600px)"></i>
<i style="top:242px;background:linear-gradient(90deg,#0053ff 0px,#031fff 163px,#4c0cff 224px,#a000ff 282px,#ff00fc 342px,#ff00c6 382px,#ff0095 438px,#ff006a 521px,#ff0051 600px)"></i>
<i style="top:244px;background:linear-gradient(90deg,#0051ff 0px,#031eff 163px,#4c0bff 225px,#9c00ff 281px,#ff00fc 344px,#ff00c5 385px,#ff0094 442px,#ff0069 526px,#ff0052 600px)"></i>
<i style="top:246px;background:linear-gradient(90deg,#0050ff 0px,#021dff 163px,#4a0aff 225px,#9800ff 280px,#ff00fc 346px,#ff00c5 387px,#ff0094 445px,#ff0069 530px,#ff0053 600px)"></i>
<i style="top:248px;background:linear-gradient(90deg,#004eff 0px,#031cff 164px,#4c09ff 227px,#9500ff 279px,#ff00fd 348px,#ff00c5 390px,#ff0094 448px,#ff006a 533px,#ff0054 600px)"></i>
<i style="top:250px;background:linear-gradient(90deg,#004dff 0px,#031bff 164px,#4b09ff 227px,#9100ff 278px,#ff00fd 350px,#ff00c5 392px,#ff0094 451px,#ff0069 537px,#ff0055 600px)"></i>
<i style="top:252px;background:linear-gradient(90deg,#004cff 0px,#021aff 164px,#4908ff 227px,#8e00ff 277px,#ff00fd 352px,#ff00c6 394px,#ff0095 453px,#ff006a 540px,#ff0057 600px)"></i>
<i style="top:254px;background:linear-gradient(90deg,#004aff 0px,#0319ff 165px,#4c06ff 230px,#8f00ff 279px,#ff00fd 354px,#ff00c5 397px,#ff0094 457px,#ff0069 545px,#ff0058 600px)"></i>
<i style="top:256px;background:linear-gradient(90deg,#0049ff 0px,#0318ff 165px,#4b06ff 230px,#8e00ff 280px,#ff00fd 356px,#ff00c5 399px,#ff0095 459px,#ff006a 547px,#ff0059 600px)"></i>
<i style="top:258px;background:linear-gradient(90deg,#0048ff 0px,#0217ff 165px,#4a05ff 230px,#9000ff 283px,#ff00fd 358px,#ff00c6 401px,#ff0095 462px,#ff006a 551px,#ff005a 600px)"></i>
<i style="top:260px;background:linear-gradient(90deg,#0046ff 0px,#0316ff 166px,#4b04ff 232px,#a200ff 297px,#ff00fd 360px,#ff00c5 404px,#ff0094 465px,#ff006a 555px,#ff005b 600px)"></i>
<i style="top:262px;background:linear-gradient(90deg,#0045ff 0px,#0316ff 166px,#4a04ff 232px,#c300ff 321px,#ff00fd 362px,#ff00c6 406px,#ff0094 468px,#ff006a 559px,#ff005c 600px)"></i>
<i style="top:264px;background:linear-gradient(90deg,#0044ff 0px,#0315ff 167px,#4d02ff 235px,#ce00ff 330px,#ff00fd 364px,#ff00c5 409px,#ff0094 472px,#ff0069 564px,#ff005e 600px)"></i>
<i style="top:266px;background:linear-gradient(90deg,#0043ff 0px,#0314ff 167px,#4b02ff 235px,#cb00ff 330px,#ff00fd 366px,#ff00c5 411px,#ff0094 474px,#ff006a 566px,#ff005f 600px)"></i>
<i style="top:268px;background:linear-gradient(90deg,#0041ff 0px,#0213ff 167px,#4a02ff 235px,#ca00ff 331px,#ff00fd 368px,#ff00c6 413px,#ff0095 476px,#ff006a 569px,#ff0060 600px)"></i>
<i style="top:270px;background:linear-gradient(90deg,#0040ff 0px,#0312ff 168px,#4d01ff 238px,#cd00ff 335px,#ff00fd 370px,#ff00c5 416px,#ff0094 480px,#ff0069 574px,#ff0061 600px)"></i>
<i style="top:272px;background:linear-gradient(90deg,#003fff 0px,#0311ff 168px,#4c00ff 238px,#cc00ff 336px,#ff00fd 372px,#ff00c6 418px,#ff0095 482px,#ff006a 576px,#ff0062 600px)"></i>
<i style="top:274px;background:linear-gradient(90deg,#003eff 0px,#0211ff 168px,#4b00ff 238px,#ca00ff 336px,#ff00fd 374px,#ff00c6 420px,#ff0095 485px,#ff006a 580px,#ff0063 600px)"></i>
<i style="top:276px;background:linear-gradient(90deg,#003dff 0px,#0310ff 169px,#4c00ff 240px,#cc00ff 339px,#ff00fd 376px,#ff00c5 423px,#ff0094 489px,#ff0069 585px,#ff0065 600px)"></i>
<i style="top:278px;background:linear-gradient(90deg,#003cff 0px,#030fff 169px,#4b00ff 240px,#cb00ff 340px,#ff00fd 378px,#ff00c6 425px,#ff0095 491px,#ff006a 588px,#ff0066 600px)"></i>
<i style="top:280px;background:linear-gradient(90deg,#003bff 0px,#020eff 169px,#4a00ff 240px,#ca00ff 341px,#ff00fd 380px,#ff00c6 427px,#ff0095 493px,#ff006a 590px,#ff0067 600px)"></i>
<i style="top:282px;background:linear-gradient(90deg,#003aff 0px,#030eff 170px,#4c00ff 243px,#cd00ff 345px,#ff00fd 382px,#ff00c6 430px,#ff0095 497px,#ff006a 595px,#ff0068 600px)"></i>
<i style="top:284px;background:linear-gradient(90deg,#0039ff 0px,#030dff 170px,#4b00ff 243px,#cc00ff 346px,#ff00fd 384px,#ff00c6 432px,#ff0095 499px,#ff006a 598px,#ff0069 600px)"></i>
<i style="top:286px;background:linear-gradient(90deg,#0038ff 0px,#020cff 170px,#4900ff 242px,#c800ff 345px,#ff00fd 386px,#ff00c5 435px,#ff0094 503px,#ff006b 600px)"></i>
<i style="top:288px;background:linear-gradient(90deg,#0037ff 0px,#030bff 171px,#4700ff 241px,#c600ff 345px,#ff00fd 388px,#ff00c6 437px,#ff0094 506px,#ff006c 600px)"></i>
<i style="top:290px;background:linear-gradient(90deg,#0036ff 0px,#030bff 171px,#4500ff 240px,#c200ff 344px,#ff00fd 390px,#ff00c6 439px,#ff0095 508px,#ff006d 600px)"></i>
<i style="top:292px;background:linear-gradient(90deg,#0035ff 0px,#030aff 172px,#4300ff 239px,#c000ff 344px,#ff00fc 393px,#ff00c5 443px,#ff0094 513px,#ff006e 600px)"></i>
<i style="top:294px;background:linear-gradient(90deg,#0034ff 0px,#030aff 172px,#4100ff 238px,#bd00ff 343px,#ff00fc 395px,#ff00c5 445px,#ff0094 515px,#ff006f 600px)"></i>
<i style="top:296px;background:linear-gradient(90deg,#0033ff 0px,#0309ff 172px,#3f00ff 237px,#ba00ff 343px,#ff00fc 397px,#ff00c5 448px,#ff0094 519px,#ff0071 600px)"></i>
<i style="top:298px;background:linear-gradient(90deg,#0032ff 0px,#0308ff 173px,#3d00ff 236px,#b700ff 342px,#ff00fc 399px,#ff00c5 450px,#ff0094 522px,#ff0072 600px)"></i>
<i style="top:300px;background:linear-gradient(90deg,#0031ff 0px,#0308ff 173px,#3b00ff 235px,#b500ff 342px,#ff00fc 401px,#ff00c4 453px,#ff0094 525px,#ff0073 600px)"></i>
<i style="top:302px;background:linear-gradient(90deg,#0030ff 0px,#0207ff 173px,#3a00ff 235px,#b300ff 342px,#ff00fc 403px,#ff00c5 455px,#ff0094 528px,#ff0074 600px)"></i>
<i style="top:304px;background:linear-gradient(90deg,#002fff 0px,#0307ff 174px,#3a00ff 236px,#b400ff 344px,#ff00fc 405px,#ff00c5 457px,#ff0094 530px,#ff0076 600px)"></i>
<i style="top:306px;background:linear-gradient(90deg,#002eff 0px,#0306ff 174px,#3b00ff 237px,#b400ff 346px,#ff00fc 407px,#ff00c5 460px,#ff0094 534px,#ff0077 600px)"></i>
<i style="top:308px;background:linear-gradient(90deg,#002eff 0px,#0206ff 174px,#3b00ff 238px,#b500ff 348px,#ff00fc 409px,#ff00c5 462px,#ff0094 536px,#ff0078 600px)"></i>
<i style="top:310px;background:linear-gradient(90deg,#002dff 0px,#0305ff 175px,#4000ff 244px,#bb00ff 355px,#ff00fc 411px,#ff00c5 464px,#ff0094 539px,#ff0079 600px)"></i>
<i style="top:312px;background:linear-gradient(90deg,#002cff 0px,#0304ff 175px,#4500ff 250px,#c300ff 363px,#ff00fc 413px,#ff00c5 467px,#ff0094 542px,#ff007b 600px)"></i>
<i style="top:314px;background:linear-gradient(90deg,#002bff 0px,#0304ff 176px,#4c00ff 258px,#cd00ff 373px,#ff00fc 415px,#ff00c5 469px,#ff0094 545px,#ff007c 600px)"></i>
<i style="top:316px;background:linear-gradient(90deg,#002aff 0px,#0303ff 176px,#4b00ff 258px,#cb00ff 373px,#ff00fc 417px,#ff00c5 472px,#ff0093 549px,#ff007d 600px)"></i>
<i style="top:318px;background:linear-gradient(90deg,#0029ff 0px,#0303ff 176px,#4a00ff 258px,#ca00ff 374px,#ff00fc 419px,#ff00c5 474px,#ff0094 551px,#ff007e 600px)"></i>
<i style="top:320px;background:linear-gradient(90deg,#0029ff 0px,#0302ff 177px,#4c00ff 261px,#cd00ff 378px,#ff00fc 421px,#ff00c5 476px,#ff0094 553px,#ff0080 600px)"></i>
<i style="top:322px;background:linear-gradient(90deg,#0028ff 0px,#0302ff 177px,#4b00ff 261px,#cc00ff 379px,#ff00fc 423px,#ff00c5 479px,#ff0094 557px,#ff0081 600px)"></i>
<i style="top:324px;background:linear-gradient(90deg,#0027ff 0px,#0302ff 177px,#4b00ff 261px,#ca00ff 379px,#ff00fc 425px,#ff00c5 481px,#ff0094 559px,#ff0082 600px)"></i>
<i style="top:326px;background:linear-gradient(90deg,#0026ff 0px,#0301ff 178px,#4d00ff 264px,#ce00ff 384px,#ff00fc 427px,#ff00c5 483px,#ff0094 562px,#ff0083 600px)"></i>
<i style="top:328px;background:linear-gradient(90deg,#0026ff 0px,#0301ff 178px,#4c00ff 264px,#cc00ff 384px,#ff00fc 429px,#ff00c5 486px,#ff0094 566px,#ff0085 600px)"></i>
<i style="top:330px;background:linear-gradient(90deg,#0025ff 0px,#0301ff 178px,#4b00ff 264px,#cb00ff 385px,#ff00fc 431px,#ff00c5 488px,#ff0094 568px,#ff0086 600px)"></i>
<i style="top:332px;background:linear-gradient(90deg,#0024ff 0px,#0300ff 179px,#4c00ff 266px,#cc00ff 388px,#ff00fc 433px,#ff00c5 491px,#ff0094 572px,#ff0087 600px)"></i>
<i style="top:334px;background:linear-gradient(90deg,#0024ff 0px,#0300ff 179px,#4b00ff 266px,#cc00ff 389px,#ff00fc 435px,#ff00c5 493px,#ff0094 574px,#ff0089 600px)"></i>
<i style="top:336px;background:linear-gradient(90deg,#0023ff 0px,#0300ff 180px,#4d00ff 269px,#ce00ff 393px,#ff00fd 437px,#ff00c5 495px,#ff0094 576px,#ff008a 600px)"></i>
<i style="top:338px;background:linear-gradient(90deg,#0022ff 0px,#0300ff 180px,#4c00ff 269px,#cc00ff 393px,#ff00fd 439px,#ff00c5 498px,#ff0094 580px,#ff008b 600px)"></i>
<i style="top:340px;background:linear-gradient(90deg,#0022ff 0px,#0300ff 180px,#4b00ff 269px,#cb00ff 394px,#ff00fd 441px,#ff00c5 500px,#ff0094 583px,#ff008c 600px)"></i>
<i style="top:342px;background:linear-gradient(90deg,#0021ff 0px,#0300ff 181px,#4c00ff 271px,#cd00ff 397px,#ff00fd 443px,#ff00c6 502px,#ff0094 585px,#ff008e 600px)"></i>
<i style="top:344px;background:linear-gradient(90deg,#0020ff 0px,#0300ff 181px,#4b00ff 271px,#cc00ff 398px,#ff00fd 445px,#ff00c5 505px,#ff0094 589px,#ff008f 600px)"></i>
<i style="top:346px;background:linear-gradient(90deg,#0020ff 0px,#0300ff 181px,#4b00ff 272px,#cb00ff 399px,#ff00fd 447px,#ff00c5 507px,#ff0094 591px,#ff0090 600px)"></i>
<i style="top:348px;background:linear-gradient(90deg,#001fff 0px,#0100ff 179px,#4500ff 266px,#c300ff 393px,#ff00fd 449px,#ff00c6 509px,#ff0095 593px,#ff0092 600px)"></i>
<i style="top:350px;background:linear-gradient(90deg,#001eff 0px,#0000ff 177px,#3e00ff 259px,#ba00ff 386px,#ff00fd 451px,#ff00c5 512px,#ff0094 597px,#ff0093 600px)"></i>
<i style="top:352px;background:linear-gradient(90deg,#001eff 0px,#0000ff 176px,#3500ff 249px,#ac00ff 375px,#ff00fd 453px,#ff00c6 514px,#ff0094 600px)"></i>
<i style="top:354px;background:linear-gradient(90deg,#001dff 0px,#0000ff 174px,#2100ff 225px,#8c00ff 345px,#ff00fd 455px,#ff00c5 517px,#ff0096 600px)"></i>
<i style="top:356px;background:linear-gradient(90deg,#001dff 0px,#0000ff 172px,#0f00ff 202px,#6c00ff 312px,#ff00fd 457px,#ff00c5 519px,#ff0097 600px)"></i>
<i style="top:358px;background:linear-gradient(90deg,#001cff 0px,#0000ff 170px,#0800ff 192px,#5c00ff 296px,#e100ff 430px,#ff00fc 460px,#ff00c4 523px,#ff0098 600px)"></i>
<i style="top:360px;background:linear-gradient(90deg,#001bff 0px,#0000ff 169px,#0700ff 191px,#5900ff 294px,#de00ff 429px,#ff00fc 462px,#ff00c5 525px,#ff009a 600px)"></i>
<i style="top:362px;background:linear-gradient(90deg,#001bff 0px,#0000ff 167px,#0600ff 189px,#5500ff 290px,#d800ff 425px,#ff00fd 463px,#ff00c6 526px,#ff009b 600px)"></i>
<i style="top:364px;background:linear-gradient(90deg,#001aff 0px,#0000ff 165px,#0500ff 188px,#5200ff 288px,#d500ff 424px,#ff00fc 466px,#ff00c4 530px,#ff009c 600px)"></i>
<i style="top:366px;background:linear-gradient(90deg,#001aff 0px,#0000ff 164px,#0500ff 188px,#5200ff 289px,#d400ff 425px,#ff00fc 468px,#ff00c5 532px,#ff009d 600px)"></i>
<i style="top:368px;background:linear-gradient(90deg,#0019ff 0px,#0000ff 162px,#0400ff 188px,#5100ff 289px,#d400ff 426px,#ff00fc 470px,#ff00c4 535px,#ff009f 600px)"></i>
<i style="top:370px;background:linear-gradient(90deg,#0019ff 0px,#0000ff 160px,#0400ff 188px,#5000ff 289px,#d300ff 427px,#ff00fc 472px,#ff00c5 537px,#ff00a0 600px)"></i>
<i style="top:372px;background:linear-gradient(90deg,#0018ff 0px,#0000ff 159px,#0400ff 188px,#5000ff 289px,#d100ff 427px,#ff00fc 474px,#ff00c5 539px,#ff00a2 600px)"></i>
<i style="top:374px;background:linear-gradient(90deg,#0018ff 0px,#0000ff 157px,#0400ff 188px,#4f00ff 289px,#d000ff 428px,#ff00fc 476px,#ff00c4 542px,#ff00a3 600px)"></i>
<i style="top:376px;background:linear-gradient(90deg,#0017ff 0px,#0000ff 155px,#0400ff 188px,#4e00ff 289px,#cf00ff 429px,#ff00fc 478px,#ff00c5 544px,#ff00a4 600px)"></i>
<i style="top:378px;background:linear-gradient(90deg,#0017ff 0px,#0000ff 154px,#0300ff 188px,#4d00ff 289px,#cf00ff 430px,#ff00fc 480px,#ff00c5 546px,#ff00a6 600px)"></i>
<i style="top:380px;background:linear-gradient(90deg,#0016ff 0px,#0000ff 152px,#0400ff 189px,#4f00ff 292px,#d100ff 434px,#ff00fc 482px,#ff00c5 549px,#ff00a7 600px)"></i>
<i style="top:382px;background:linear-gradient(90deg,#0016ff 0px,#0000ff 150px,#0300ff 189px,#4e00ff 292px,#cf00ff 434px,#ff00fc 484px,#ff00c5 551px,#ff00a8 600px)"></i>
<i style="top:384px;background:linear-gradient(90deg,#0015ff 0px,#0000ff 149px,#0300ff 189px,#4d00ff 292px,#ce00ff 435px,#ff00fc 486px,#ff00c4 554px,#ff00aa 600px)"></i>
<i style="top:386px;background:linear-gradient(90deg,#0015ff 0px,#0000ff 147px,#0400ff 190px,#4e00ff 294px,#d000ff 438px,#ff00fc 488px,#ff00c5 556px,#ff00ab 600px)"></i>
<i style="top:388px;background:linear-gradient(90deg,#0014ff 0px,#0000ff 145px,#0300ff 190px,#4e00ff 295px,#d000ff 440px,#ff00fc 490px,#ff00c5 558px,#ff00ac 600px)"></i>
<i style="top:390px;background:linear-gradient(90deg,#0014ff 0px,#0000ff 144px,#0300ff 190px,#4d00ff 295px,#ce00ff 440px,#ff00fc 492px,#ff00c5 561px,#ff00ae 600px)"></i>
<i style="top:392px;background:linear-gradient(90deg,#0013ff 0px,#0000ff 142px,#0300ff 190px,#4d00ff 295px,#ce00ff 441px,#ff00fc 494px,#ff00c5 563px,#ff00af 600px)"></i>
<i style="top:394px;background:linear-gradient(90deg,#0013ff 0px,#0000ff 141px,#0300ff 191px,#4e00ff 297px,#cf00ff 444px,#ff00fc 496px,#ff00c5 565px,#ff00b1 600px)"></i>
<i style="top:396px;background:linear-gradient(90deg,#0012ff 0px,#0000ff 139px,#0300ff 191px,#4d00ff 297px,#ce00ff 445px,#ff00fc 498px,#ff00c5 568px,#ff00b2 600px)"></i>
<i style="top:398px;background:linear-gradient(90deg,#0012ff 0px,#0000ff 137px,#0300ff 191px,#4c00ff 297px,#cc00ff 445px,#ff00fc 500px,#ff00c5 570px,#ff00b3 600px)"></i>
<i style="top:400px;background:linear-gradient(90deg,#0011ff 0px,#0000ff 136px,#0300ff 192px,#4e00ff 300px,#cf00ff 449px,#ff00fc 502px,#ff00c5 573px,#ff00b5 600px)"></i>
<i style="top:402px;background:linear-gradient(90deg,#0011ff 0px,#0000ff 134px,#0300ff 192px,#4d00ff 300px,#ce00ff 450px,#ff00fc 504px,#ff00c5 575px,#ff00b6 600px)"></i>
<i style="top:404px;background:linear-gradient(90deg,#0011ff 0px,#0000ff 133px,#0300ff 192px,#4c00ff 300px,#cd00ff 451px,#ff00fc 506px,#ff00c5 577px,#ff00b8 600px)"></i>
<i style="top:406px;background:linear-gradient(90deg,#0010ff 0px,#0000ff 131px,#0300ff 193px,#4e00ff 303px,#cf00ff 455px,#ff00fc 508px,#ff00c5 580px,#ff00b9 600px)"></i>
<i style="top:408px;background:linear-gradient(90deg,#0010ff 0px,#0000ff 129px,#0300ff 193px,#4d00ff 303px,#cf00ff 456px,#ff00fc 510px,#ff00c5 582px,#ff00ba 600px)"></i>
<i style="top:410px;background:linear-gradient(90deg,#000fff 0px,#0000ff 128px,#0300ff 193px,#4c00ff 303px,#cd00ff 456px,#ff00fc 512px,#ff00c5 584px,#ff00bc 600px)"></i>
<i style="top:412px;background:linear-gradient(90deg,#000fff 0px,#0000ff 126px,#0300ff 194px,#4d00ff 305px,#ce00ff 459px,#ff00fc 514px,#ff00c5 587px,#ff00bd 600px)"></i>
<i style="top:414px;background:linear-gradient(90deg,#000eff 0px,#0000ff 125px,#0300ff 194px,#4d00ff 305px,#cd00ff 460px,#ff00fc 516px,#ff00c5 589px,#ff00bf 600px)"></i>
<i style="top:416px;background:linear-gradient(90deg,#000eff 0px,#0000ff 123px,#0300ff 194px,#4c00ff 305px,#cd00ff 461px,#ff00fc 518px,#ff00c5 592px,#ff00c0 600px)"></i>
<i style="top:418px;background:linear-gradient(90deg,#000eff 0px,#0000ff 122px,#0300ff 195px,#4d00ff 308px,#cf00ff 465px,#ff00fc 520px,#ff00c5 594px,#ff00c1 600px)"></i>
<i style="top:420px;background:linear-gradient(90deg,#000dff 0px,#0000ff 120px,#0300ff 195px,#4d00ff 308px,#cd00ff 465px,#ff00fc 522px,#ff00c5 596px,#ff00c3 600px)"></i>
<i style="top:422px;background:linear-gradient(90deg,#000dff 0px,#0000ff 119px,#0300ff 195px,#4c00ff 308px,#cd00ff 466px,#ff00fc 524px,#ff00c5 599px,#ff00c4 600px)"></i>
<i style="top:424px;background:linear-gradient(90deg,#000dff 0px,#0000ff 118px,#0300ff 196px,#4d00ff 310px,#ce00ff 469px,#ff00fd 526px,#ff00c6 600px)"></i>
<i style="top:426px;background:linear-gradient(90deg,#000cff 0px,#0000ff 116px,#0300ff 196px,#4c00ff 310px,#cd00ff 470px,#ff00fd 528px,#ff00c7 600px)"></i>
<i style="top:428px;background:linear-gradient(90deg,#000cff 0px,#0000ff 115px,#0300ff 197px,#4e00ff 313px,#cf00ff 474px,#ff00fd 530px,#ff00c9 600px)"></i>
<i style="top:430px;background:linear-gradient(90deg,#000bff 0px,#0000ff 113px,#0300ff 197px,#4d00ff 313px,#ce00ff 474px,#ff00fd 532px,#ff00ca 600px)"></i>
<i style="top:432px;background:linear-gradient(90deg,#000bff 0px,#0000ff 112px,#0300ff 197px,#4c00ff 313px,#cd00ff 475px,#ff00fd 534px,#ff00cb 600px)"></i>
<i style="top:434px;background:linear-gradient(90deg,#000bff 0px,#0000ff 111px,#0300ff 198px,#4e00ff 316px,#cf00ff 479px,#ff00fd 536px,#ff00cd 600px)"></i>
<i style="top:436px;background:linear-gradient(90deg,#000aff 0px,#0000ff 110px,#0300ff 198px,#4d00ff 316px,#ce00ff 480px,#ff00fd 538px,#ff00ce 600px)"></i>
<i style="top:438px;background:linear-gradient(90deg,#000aff 0px,#0000ff 108px,#0300ff 198px,#4c00ff 316px,#cd00ff 480px,#ff00fd 540px,#ff00d0 600px)"></i>
<i style="top:440px;background:linear-gradient(90deg,#000aff 0px,#0000ff 107px,#0300ff 199px,#4d00ff 318px,#ce00ff 483px,#ff00fc 543px,#ff00d1 600px)"></i>
<i style="top:442px;background:linear-gradient(90deg,#0009ff 0px,#0000ff 106px,#0300ff 199px,#4c00ff 318px,#cd00ff 484px,#ff00fc 545px,#ff00d3 600px)"></i>
<i style="top:444px;background:linear-gradient(90deg,#0009ff 0px,#0000ff 105px,#0300ff 199px,#4c00ff 318px,#cd00ff 485px,#ff00fc 547px,#ff00d4 600px)"></i>
<i style="top:446px;background:linear-gradient(90deg,#0009ff 0px,#0000ff 104px,#0300ff 200px,#4d00ff 321px,#ce00ff 489px,#ff00fc 549px,#ff00d6 600px)"></i>
<i style="top:448px;background:linear-gradient(90deg,#0008ff 0px,#0000ff 103px,#0300ff 200px,#4d00ff 321px,#ce00ff 490px,#ff00fc 551px,#ff00d7 600px)"></i>
<i style="top:450px;background:linear-gradient(90deg,#0008ff 0px,#0000ff 103px,#0300ff 200px,#4c00ff 321px,#cc00ff 490px,#ff00fc 553px,#ff00d9 600px)"></i>
<i style="top:452px;background:linear-gradient(90deg,#0008ff 0px,#0000ff 102px,#0300ff 201px,#4d00ff 323px,#cd00ff 493px,#ff00fc 555px,#ff00da 600px)"></i>
<i style="top:454px;background:linear-gradient(90deg,#0007ff 0px,#0000ff 101px,#0300ff 201px,#4d00ff 324px,#ce00ff 495px,#ff00fc 557px,#ff00dc 600px)"></i>
<i style="top:456px;background:linear-gradient(90deg,#0007ff 0px,#0000ff 101px,#0300ff 202px,#4d00ff 326px,#cf00ff 498px,#ff00fc 559px,#ff00dd 600px)"></i>
<i style="top:458px;background:linear-gradient(90deg,#0007ff 0px,#0000ff 101px,#0300ff 202px,#4d00ff 326px,#ce00ff 499px,#ff00fc 561px,#ff00df 600px)"></i>
<i style="top:460px;background:linear-gradient(90deg,#0007ff 0px,#0000ff 101px,#0300ff 202px,#4d00ff 326px,#cd00ff 499px,#ff00fc 562px,#ff00df 600px)"></i>
<svg width="600" height="461" style="position:absolute;left:0;top:0"><path d="M0 0H600V461H0zM449.2 58.3L124.4 27.9L174.7 338.6z" fill="#000" fill-opacity=".39" fill-rule="evenodd"/></svg>
</div></div>
<svg id="ov" width="1550" height="864" viewBox="0 0 1550 864">
<defs><linearGradient id="dd" x1="0" y1="0" x2="0" y2="1"><stop offset="0" stop-color="#6c6c6c"/><stop offset="1" stop-color="#474747"/></linearGradient><linearGradient id="b100r" x1="0" y1="0" x2="1" y2="0"><stop offset="0" stop-color="#cf5454"/><stop offset="0.3" stop-color="#bd1212"/><stop offset="0.78" stop-color="#bd1212"/><stop offset="1" stop-color="#6d0a0a"/></linearGradient><linearGradient id="b100g" x1="0" y1="0" x2="1" y2="0"><stop offset="0" stop-color="#54cf54"/><stop offset="0.3" stop-color="#12bd12"/><stop offset="0.78" stop-color="#12bd12"/><stop offset="1" stop-color="#0a6d0a"/></linearGradient><linearGradient id="b100b" x1="0" y1="0" x2="1" y2="0"><stop offset="0" stop-color="#5454cf"/><stop offset="0.3" stop-color="#1212bd"/><stop offset="0.78" stop-color="#1212bd"/><stop offset="1" stop-color="#0a0a6d"/></linearGradient><linearGradient id="b100c" x1="0" y1="0" x2="1" y2="0"><stop offset="0" stop-color="#54cfcf"/><stop offset="0.3" stop-color="#12bdbd"/><stop offset="0.78" stop-color="#12bdbd"/><stop offset="1" stop-color="#0a6d6d"/></linearGradient><linearGradient id="b100m" x1="0" y1="0" x2="1" y2="0"><stop offset="0" stop-color="#cf54cf"/><stop offset="0.3" stop-color="#bd12bd"/><stop offset="0.78" stop-color="#bd12bd"/><stop offset="1" stop-color="#6d0a6d"/></linearGradient><linearGradient id="b100y" x1="0" y1="0" x2="1" y2="0"><stop offset="0" stop-color="#cfcf54"/><stop offset="0.3" stop-color="#bdbd12"/><stop offset="0.78" stop-color="#bdbd12"/><stop offset="1" stop-color="#6d6d0a"/></linearGradient><linearGradient id="b80r" x1="0" y1="0" x2="1" y2="0"><stop offset="0" stop-color="#cf7676"/><stop offset="0.3" stop-color="#bd4141"/><stop offset="0.78" stop-color="#bd4141"/><stop offset="1" stop-color="#6d2626"/></linearGradient><linearGradient id="b80g" x1="0" y1="0" x2="1" y2="0"><stop offset="0" stop-color="#76cf76"/><stop offset="0.3" stop-color="#41bd41"/><stop offset="0.78" stop-color="#41bd41"/><stop offset="1" stop-color="#266d26"/></linearGradient><linearGradient id="b80b" x1="0" y1="0" x2="1" y2="0"><stop offset="0" stop-color="#7676cf"/><stop offset="0.3" stop-color="#4141bd"/><stop offset="0.78" stop-color="#4141bd"/><stop offset="1" stop-color="#26266d"/></linearGradient><linearGradient id="b80c" x1="0" y1="0" x2="1" y2="0"><stop offset="0" stop-color="#76cfcf"/><stop offset="0.3" stop-color="#41bdbd"/><stop offset="0.78" stop-color="#41bdbd"/><stop offset="1" stop-color="#266d6d"/></linearGradient><linearGradient id="b80m" x1="0" y1="0" x2="1" y2="0"><stop offset="0" stop-color="#cf76cf"/><stop offset="0.3" stop-color="#bd41bd"/><stop offset="0.78" stop-color="#bd41bd"/><stop offset="1" stop-color="#6d266d"/></linearGradient><linearGradient id="b80y" x1="0" y1="0" x2="1" y2="0"><stop offset="0" stop-color="#cfcf76"/><stop offset="0.3" stop-color="#bdbd41"/><stop offset="0.78" stop-color="#bdbd41"/><stop offset="1" stop-color="#6d6d26"/></linearGradient><linearGradient id="b60r" x1="0" y1="0" x2="1" y2="0"><stop offset="0" stop-color="#cf9292"/><stop offset="0.3" stop-color="#bd6767"/><stop offset="0.78" stop-color="#bd6767"/><stop offset="1" stop-color="#6d3c3c"/></linearGradient><linearGradient id="b60g" x1="0" y1="0" x2="1" y2="0"><stop offset="0" stop-color="#92cf92"/><stop offset="0.3" stop-color="#67bd67"/><stop offset="0.78" stop-color="#67bd67"/><stop offset="1" stop-color="#3c6d3c"/></linearGradient><linearGradient id="b60b" x1="0" y1="0" x2="1" y2="0"><stop offset="0" stop-color="#9292cf"/><stop offset="0.3" stop-color="#6767bd"/><stop offset="0.78" stop-color="#6767bd"/><stop offset="1" stop-color="#3c3c6d"/></linearGradient><linearGradient id="b60c" x1="0" y1="0" x2="1" y2="0"><stop offset="0" stop-color="#92cfcf"/><stop offset="0.3" stop-color="#67bdbd"/><stop offset="0.78" stop-color="#67bdbd"/><stop offset="1" stop-color="#3c6d6d"/></linearGradient><linearGradient id="b60m" x1="0" y1="0" x2="1" y2="0"><stop offset="0" stop-color="#cf92cf"/><stop offset="0.3" stop-color="#bd67bd"/><stop offset="0.78" stop-color="#bd67bd"/><stop offset="1" stop-color="#6d3c6d"/></linearGradient><linearGradient id="b60y" x1="0" y1="0" x2="1" y2="0"><stop offset="0" stop-color="#cfcf92"/><stop offset="0.3" stop-color="#bdbd67"/><stop offset="0.78" stop-color="#bdbd67"/><stop offset="1" stop-color="#6d6d3c"/></linearGradient><linearGradient id="b40r" x1="0" y1="0" x2="1" y2="0"><stop offset="0" stop-color="#cfa8a8"/><stop offset="0.3" stop-color="#bd8787"/><stop offset="0.78" stop-color="#bd8787"/><stop offset="1" stop-color="#6d4e4e"/></linearGradient><linearGradient id="b40g" x1="0" y1="0" x2="1" y2="0"><stop offset="0" stop-color="#a8cfa8"/><stop offset="0.3" stop-color="#87bd87"/><stop offset="0.78" stop-color="#87bd87"/><stop offset="1" stop-color="#4e6d4e"/></linearGradient><linearGradient id="b40b" x1="0" y1="0" x2="1" y2="0"><stop offset="0" stop-color="#a8a8cf"/><stop offset="0.3" stop-color="#8787bd"/><stop offset="0.78" stop-color="#8787bd"/><stop offset="1" stop-color="#4e4e6d"/></linearGradient><linearGradient id="b40c" x1="0" y1="0" x2="1" y2="0"><stop offset="0" stop-color="#a8cfcf"/><stop offset="0.3" stop-color="#87bdbd"/><stop offset="0.78" stop-color="#87bdbd"/><stop offset="1" stop-color="#4e6d6d"/></linearGradient><linearGradient id="b40m" x1="0" y1="0" x2="1" y2="0"><stop offset="0" stop-color="#cfa8cf"/><stop offset="0.3" stop-color="#bd87bd"/><stop offset="0.78" stop-color="#bd87bd"/><stop offset="1" stop-color="#6d4e6d"/></linearGradient><linearGradient id="b40y" x1="0" y1="0" x2="1" y2="0"><stop offset="0" stop-color="#cfcfa8"/><stop offset="0.3" stop-color="#bdbd87"/><stop offset="0.78" stop-color="#bdbd87"/><stop offset="1" stop-color="#6d6d4e"/></linearGradient><linearGradient id="b20r" x1="0" y1="0" x2="1" y2="0"><stop offset="0" stop-color="#cfbdbd"/><stop offset="0.3" stop-color="#bda3a3"/><stop offset="0.78" stop-color="#bda3a3"/><stop offset="1" stop-color="#6d5e5e"/></linearGradient><linearGradient id="b20g" x1="0" y1="0" x2="1" y2="0"><stop offset="0" stop-color="#bdcfbd"/><stop offset="0.3" stop-color="#a3bda3"/><stop offset="0.78" stop-color="#a3bda3"/><stop offset="1" stop-color="#5e6d5e"/></linearGradient><linearGradient id="b20b" x1="0" y1="0" x2="1" y2="0"><stop offset="0" stop-color="#bdbdcf"/><stop offset="0.3" stop-color="#a3a3bd"/><stop offset="0.78" stop-color="#a3a3bd"/><stop offset="1" stop-color="#5e5e6d"/></linearGradient><linearGradient id="b20c" x1="0" y1="0" x2="1" y2="0"><stop offset="0" stop-color="#bdcfcf"/><stop offset="0.3" stop-color="#a3bdbd"/><stop offset="0.78" stop-color="#a3bdbd"/><stop offset="1" stop-color="#5e6d6d"/></linearGradient><linearGradient id="b20m" x1="0" y1="0" x2="1" y2="0"><stop offset="0" stop-color="#cfbdcf"/><stop offset="0.3" stop-color="#bda3bd"/><stop offset="0.78" stop-color="#bda3bd"/><stop offset="1" stop-color="#6d5e6d"/></linearGradient><linearGradient id="b20y" x1="0" y1="0" x2="1" y2="0"><stop offset="0" stop-color="#cfcfbd"/><stop offset="0.3" stop-color="#bdbda3"/><stop offset="0.78" stop-color="#bdbda3"/><stop offset="1" stop-color="#6d6d5e"/></linearGradient><linearGradient id="ybar" x1="0" y1="0" x2="0" y2="1"><stop offset="0" stop-color="#b4b428"/><stop offset="0.07" stop-color="#c8c806"/><stop offset="0.42" stop-color="#c6c600"/><stop offset="1" stop-color="#3c3c08"/></linearGradient><linearGradient id="rr" x1="0" y1="0" x2="0" y2="1"><stop offset="0" stop-color="#ff5c5c"/><stop offset="1" stop-color="#ff2c2c"/></linearGradient><linearGradient id="th" x1="0" y1="0" x2="0" y2="1"><stop offset="0" stop-color="#3c3c3c"/><stop offset="0.48" stop-color="#2c2c2c"/><stop offset="0.5" stop-color="#1c1c1c"/><stop offset="1" stop-color="#0e0e0e"/></linearGradient><linearGradient id="ins" gradientUnits="userSpaceOnUse" x1="1356.5" y1="366.6" x2="1532.5" y2="524.6"><stop offset="0" stop-color="#a8ff00"/><stop offset=".5" stop-color="#ffff00"/><stop offset="1" stop-color="#ffb400"/></linearGradient><linearGradient id="bar" x1="0" y1="0" x2="0" y2="1"><stop offset="0" stop-color="#494949"/><stop offset="1" stop-color="#222222"/></linearGradient><linearGradient id="gap" x1="0" y1="0" x2="0" y2="1"><stop offset="0" stop-color="#3b3b3b"/><stop offset="1" stop-color="#2b2b2b"/></linearGradient><linearGradient id="barl" x1="0" y1="0" x2="1" y2="0"><stop offset="0" stop-color="#303030"/><stop offset="1" stop-color="#303030" stop-opacity="0"/></linearGradient><linearGradient id="barr" x1="0" y1="0" x2="1" y2="0"><stop offset="0" stop-color="#222" stop-opacity="0"/><stop offset="1" stop-color="#222"/></linearGradient><linearGradient id="tile" x1="0" y1="0" x2="0" y2="1"><stop offset="0" stop-color="#a2a2a2"/><stop offset="0.5" stop-color="#7c7c7c"/><stop offset="1" stop-color="#565656"/></linearGradient><linearGradient id="tsel" x1="0" y1="0" x2="0" y2="1"><stop offset="0" stop-color="#161616"/><stop offset="1" stop-color="#3a3a3a"/></linearGradient><linearGradient id="cir" x1="0" y1="0" x2="0" y2="1"><stop offset="0" stop-color="#6e6e6e"/><stop offset="1" stop-color="#9a9a9a"/></linearGradient><linearGradient id="btn" x1="0" y1="0" x2="0" y2="1"><stop offset="0" stop-color="#a9a9a9"/><stop offset="1" stop-color="#6c6c6c"/></linearGradient><linearGradient id="btn2" x1="0" y1="0" x2="0" y2="1"><stop offset="0" stop-color="#b4b4b4"/><stop offset="1" stop-color="#7e7e7e"/></linearGradient><linearGradient id="ta" x1="0" y1="0" x2="0" y2="1"><stop offset="0" stop-color="#a6a6a6"/><stop offset="1" stop-color="#8c8c8c"/></linearGradient><linearGradient id="tb" x1="0" y1="0" x2="0" y2="1"><stop offset="0" stop-color="#8c8c8c"/><stop offset="1" stop-color="#5c5c5c"/></linearGradient><linearGradient id="cir2" x1="0" y1="0" x2="0" y2="1"><stop offset="0" stop-color="#747474"/><stop offset="1" stop-color="#a4a4a4"/></linearGradient><linearGradient id="glass" x1="0" y1="0" x2="0" y2="1"><stop offset="0" stop-color="#b4b4b4"/><stop offset="0.5" stop-color="#a6a6a6"/><stop offset="0.5" stop-color="#8a8a8a"/><stop offset="1" stop-color="#969696"/></linearGradient><linearGradient id="blk" x1="0" y1="0" x2="0" y2="1"><stop offset="0" stop-color="#1c1c1c"/><stop offset="0.5" stop-color="#141414"/><stop offset="0.5" stop-color="#000"/><stop offset="1" stop-color="#000"/></linearGradient></defs>
<text font-size="38" fill="#f4f4f4"><tspan x="0.6" y="63.8" textLength="174.6" lengthAdjust="spacingAndGlyphs">Saturation</tspan> <tspan x="185.4" y="63.8" textLength="128.4" lengthAdjust="spacingAndGlyphs">Sweeps</tspan></text>
<text x="519.3" y="56.7" font-size="19" fill="#f0f0f0" textLength="56.7" lengthAdjust="spacingAndGlyphs">Levels:</text>
<rect x="582.50" y="38.00" width="317.50" height="23.20" fill="url(#dd)" stroke="#2b2b2b" stroke-width="0.8" rx="2"/>
<text x="587.8" y="56.7" font-size="15.5" fill="#f0f0f0" textLength="83.2" lengthAdjust="spacingAndGlyphs">20% Sweeps</text>
<path d="M886.8 47.2h9.2l-4.6 6.1z" fill="#000"/>
<text x="110.7" y="114.0" font-size="20" fill="#f0f0f0" textLength="100.7" lengthAdjust="spacingAndGlyphs">dE Formula:</text>
<rect x="218.80" y="94.80" width="126.00" height="24.20" fill="url(#dd)" stroke="#2b2b2b" stroke-width="0.8" rx="2"/>
<text x="223.2" y="113.9" font-size="16.8" fill="#f0f0f0" textLength="32.8" lengthAdjust="spacingAndGlyphs">2000</text>
<path d="M330.6 104.2h9.2l-4.6 6.1z" fill="#000"/>
<rect x="35.10" y="150.00" width="292.10" height="361.00" fill="#242424"/>
<line x1="74.04" y1="150.00" x2="74.04" y2="511.00" stroke="#8e8e8e" stroke-width="1.05"/>
<line x1="112.98" y1="150.00" x2="112.98" y2="511.00" stroke="#8e8e8e" stroke-width="1.05"/>
<line x1="151.92" y1="150.00" x2="151.92" y2="511.00" stroke="#8e8e8e" stroke-width="1.05"/>
<line x1="190.86" y1="150.00" x2="190.86" y2="511.00" stroke="#8e8e8e" stroke-width="1.05"/>
<line x1="229.80" y1="150.00" x2="229.80" y2="511.00" stroke="#8e8e8e" stroke-width="1.05"/>
<line x1="268.74" y1="150.00" x2="268.74" y2="511.00" stroke="#8e8e8e" stroke-width="1.05"/>
<line x1="307.68" y1="150.00" x2="307.68" y2="511.00" stroke="#8e8e8e" stroke-width="1.05"/>
<line x1="327.20" y1="150.00" x2="327.20" y2="511.00" stroke="#9c9c9c" stroke-width="1.05"/>
<line x1="35.10" y1="149.50" x2="327.70" y2="149.50" stroke="#a6a6a6" stroke-width="1.15"/>
<text x="164.4" y="143.9" font-size="12.5" fill="#dcdcdc" text-anchor="middle" textLength="73.9" lengthAdjust="spacingAndGlyphs">DeltaE 2000</text>
<rect x="35.10" y="154.90" width="132.40" height="6.00" fill="#000"/>
<rect x="35.90" y="155.90" width="130.60" height="4.00" fill="url(#b100r)"/>
<rect x="35.10" y="161.30" width="208.33" height="6.00" fill="#000"/>
<rect x="35.90" y="162.30" width="206.53" height="4.00" fill="url(#b100g)"/>
<rect x="35.10" y="167.70" width="291.60" height="6.00" fill="#000"/>
<rect x="35.90" y="168.70" width="289.80" height="4.00" fill="url(#b100b)"/>
<rect x="35.10" y="174.10" width="123.05" height="6.00" fill="#000"/>
<rect x="35.90" y="175.10" width="121.25" height="4.00" fill="url(#b100c)"/>
<rect x="35.10" y="180.50" width="201.13" height="6.00" fill="#000"/>
<rect x="35.90" y="181.50" width="199.33" height="4.00" fill="url(#b100m)"/>
<rect x="35.10" y="186.90" width="108.25" height="6.00" fill="#000"/>
<rect x="35.90" y="187.90" width="106.45" height="4.00" fill="url(#b100y)"/>
<rect x="35.10" y="215.15" width="129.28" height="6.00" fill="#000"/>
<rect x="35.90" y="216.15" width="127.48" height="4.00" fill="url(#b80r)"/>
<rect x="35.10" y="221.55" width="169.19" height="6.00" fill="#000"/>
<rect x="35.90" y="222.55" width="167.39" height="4.00" fill="url(#b80g)"/>
<rect x="35.10" y="227.95" width="209.50" height="6.00" fill="#000"/>
<rect x="35.90" y="228.95" width="207.70" height="4.00" fill="url(#b80b)"/>
<rect x="35.10" y="234.35" width="115.85" height="6.00" fill="#000"/>
<rect x="35.90" y="235.35" width="114.05" height="4.00" fill="url(#b80c)"/>
<rect x="35.10" y="240.75" width="190.22" height="6.00" fill="#000"/>
<rect x="35.90" y="241.75" width="188.42" height="4.00" fill="url(#b80m)"/>
<rect x="35.10" y="247.15" width="89.56" height="6.00" fill="#000"/>
<rect x="35.90" y="248.15" width="87.76" height="4.00" fill="url(#b80y)"/>
<rect x="35.10" y="275.40" width="125.19" height="6.00" fill="#000"/>
<rect x="35.90" y="276.40" width="123.39" height="4.00" fill="url(#b60r)"/>
<rect x="35.10" y="281.80" width="153.03" height="6.00" fill="#000"/>
<rect x="35.90" y="282.80" width="151.23" height="4.00" fill="url(#b60g)"/>
<rect x="35.10" y="288.20" width="155.18" height="6.00" fill="#000"/>
<rect x="35.90" y="289.20" width="153.38" height="4.00" fill="url(#b60b)"/>
<rect x="35.10" y="294.60" width="109.03" height="6.00" fill="#000"/>
<rect x="35.90" y="295.60" width="107.23" height="4.00" fill="url(#b60c)"/>
<rect x="35.10" y="301.00" width="163.35" height="6.00" fill="#000"/>
<rect x="35.90" y="302.00" width="161.55" height="4.00" fill="url(#b60m)"/>
<rect x="35.10" y="307.40" width="80.61" height="6.00" fill="#000"/>
<rect x="35.90" y="308.40" width="78.81" height="4.00" fill="url(#b60y)"/>
<rect x="35.10" y="335.65" width="121.10" height="6.00" fill="#000"/>
<rect x="35.90" y="336.65" width="119.30" height="4.00" fill="url(#b40r)"/>
<rect x="35.10" y="342.05" width="130.06" height="6.00" fill="#000"/>
<rect x="35.90" y="343.05" width="128.26" height="4.00" fill="url(#b40g)"/>
<rect x="35.10" y="348.45" width="96.96" height="6.00" fill="#000"/>
<rect x="35.90" y="349.45" width="95.16" height="4.00" fill="url(#b40b)"/>
<rect x="35.10" y="354.85" width="95.01" height="6.00" fill="#000"/>
<rect x="35.90" y="355.85" width="93.21" height="4.00" fill="url(#b40c)"/>
<rect x="35.10" y="361.25" width="140.18" height="6.00" fill="#000"/>
<rect x="35.90" y="362.25" width="138.38" height="4.00" fill="url(#b40m)"/>
<rect x="35.10" y="367.65" width="71.26" height="6.00" fill="#000"/>
<rect x="35.90" y="368.65" width="69.46" height="4.00" fill="url(#b40y)"/>
<rect x="35.10" y="395.90" width="108.25" height="6.00" fill="#000"/>
<rect x="35.90" y="396.90" width="106.45" height="4.00" fill="url(#b20r)"/>
<rect x="35.10" y="402.30" width="114.87" height="6.00" fill="#000"/>
<rect x="35.90" y="403.30" width="113.07" height="4.00" fill="url(#b20g)"/>
<rect x="35.10" y="408.70" width="85.86" height="6.00" fill="#000"/>
<rect x="35.90" y="409.70" width="84.06" height="4.00" fill="url(#b20b)"/>
<rect x="35.10" y="415.10" width="64.45" height="6.00" fill="#000"/>
<rect x="35.90" y="416.10" width="62.65" height="4.00" fill="url(#b20c)"/>
<rect x="35.10" y="421.50" width="111.95" height="6.00" fill="#000"/>
<rect x="35.90" y="422.50" width="110.15" height="4.00" fill="url(#b20m)"/>
<rect x="35.10" y="427.90" width="56.46" height="6.00" fill="#000"/>
<rect x="35.90" y="428.90" width="54.66" height="4.00" fill="url(#b20y)"/>
<line x1="74.04" y1="152.00" x2="74.04" y2="452.00" stroke="#fff" stroke-opacity=".10" stroke-width="1.2"/>
<line x1="112.98" y1="152.00" x2="112.98" y2="452.00" stroke="#fff" stroke-opacity=".10" stroke-width="1.2"/>
<line x1="151.92" y1="152.00" x2="151.92" y2="452.00" stroke="#fff" stroke-opacity=".10" stroke-width="1.2"/>
<line x1="190.86" y1="152.00" x2="190.86" y2="452.00" stroke="#fff" stroke-opacity=".10" stroke-width="1.2"/>
<line x1="229.80" y1="152.00" x2="229.80" y2="452.00" stroke="#fff" stroke-opacity=".10" stroke-width="1.2"/>
<line x1="268.74" y1="152.00" x2="268.74" y2="452.00" stroke="#fff" stroke-opacity=".10" stroke-width="1.2"/>
<line x1="307.68" y1="152.00" x2="307.68" y2="452.00" stroke="#fff" stroke-opacity=".10" stroke-width="1.2"/>
<rect x="35.10" y="495.10" width="7.00" height="6.00" fill="#000"/>
<rect x="35.90" y="496.10" width="5.20" height="4.00" fill="#f4f4f4"/>
<line x1="35.10" y1="149.00" x2="35.10" y2="511.50" stroke="#a6a6a6" stroke-width="1.4"/>
<line x1="35.10" y1="511.00" x2="327.20" y2="511.00" stroke="#a6a6a6" stroke-width="1.15"/>
<line x1="28.80" y1="150.00" x2="35.10" y2="150.00" stroke="#e4e4e4" stroke-width="1.2"/>
<line x1="28.80" y1="210.10" x2="35.10" y2="210.10" stroke="#e4e4e4" stroke-width="1.2"/>
<line x1="28.80" y1="270.20" x2="35.10" y2="270.20" stroke="#e4e4e4" stroke-width="1.2"/>
<line x1="28.80" y1="330.30" x2="35.10" y2="330.30" stroke="#e4e4e4" stroke-width="1.2"/>
<line x1="28.80" y1="390.40" x2="35.10" y2="390.40" stroke="#e4e4e4" stroke-width="1.2"/>
<line x1="28.80" y1="450.50" x2="35.10" y2="450.50" stroke="#e4e4e4" stroke-width="1.2"/>
<line x1="28.80" y1="510.60" x2="35.10" y2="510.60" stroke="#e4e4e4" stroke-width="1.2"/>
<line x1="35.10" y1="511.00" x2="35.10" y2="516.50" stroke="#e0e0e0" stroke-width="1.4"/>
<text x="34.6" y="531.8" font-size="12" fill="#dcdcdc" text-anchor="middle">0</text>
<line x1="74.04" y1="511.00" x2="74.04" y2="516.50" stroke="#e0e0e0" stroke-width="1.4"/>
<text x="73.5" y="531.8" font-size="12" fill="#dcdcdc" text-anchor="middle">2</text>
<line x1="112.98" y1="511.00" x2="112.98" y2="516.50" stroke="#e0e0e0" stroke-width="1.4"/>
<text x="112.5" y="531.8" font-size="12" fill="#dcdcdc" text-anchor="middle">4</text>
<line x1="151.92" y1="511.00" x2="151.92" y2="516.50" stroke="#e0e0e0" stroke-width="1.4"/>
<text x="151.4" y="531.8" font-size="12" fill="#dcdcdc" text-anchor="middle">6</text>
<line x1="190.86" y1="511.00" x2="190.86" y2="516.50" stroke="#e0e0e0" stroke-width="1.4"/>
<text x="190.4" y="531.8" font-size="12" fill="#dcdcdc" text-anchor="middle">8</text>
<line x1="229.80" y1="511.00" x2="229.80" y2="516.50" stroke="#e0e0e0" stroke-width="1.4"/>
<text x="229.3" y="531.8" font-size="12" fill="#dcdcdc" text-anchor="middle">10</text>
<line x1="268.74" y1="511.00" x2="268.74" y2="516.50" stroke="#e0e0e0" stroke-width="1.4"/>
<text x="268.2" y="531.8" font-size="12" fill="#dcdcdc" text-anchor="middle">12</text>
<line x1="307.68" y1="511.00" x2="307.68" y2="516.50" stroke="#e0e0e0" stroke-width="1.4"/>
<text x="307.2" y="531.8" font-size="12" fill="#dcdcdc" text-anchor="middle">14</text>
<text x="33.6" y="185.5" font-size="12.5" fill="#dcdcdc" text-anchor="end">100%</text>
<text x="33.6" y="245.6" font-size="12.5" fill="#dcdcdc" text-anchor="end">80%</text>
<text x="33.6" y="305.7" font-size="12.5" fill="#dcdcdc" text-anchor="end">60%</text>
<text x="33.6" y="365.8" font-size="12.5" fill="#dcdcdc" text-anchor="end">40%</text>
<text x="33.6" y="425.9" font-size="12.5" fill="#dcdcdc" text-anchor="end">20%</text>
<text x="33.6" y="487.2" font-size="12.5" fill="#dcdcdc" text-anchor="end">100</text>
<rect x="377.90" y="98.70" width="134.30" height="265.50" fill="#242424"/>
<line x1="377.90" y1="142.95" x2="512.20" y2="142.95" stroke="#8e8e8e" stroke-width="1.05"/>
<line x1="377.90" y1="187.20" x2="512.20" y2="187.20" stroke="#8e8e8e" stroke-width="1.05"/>
<line x1="377.90" y1="231.45" x2="512.20" y2="231.45" stroke="#8e8e8e" stroke-width="1.05"/>
<line x1="377.90" y1="275.70" x2="512.20" y2="275.70" stroke="#8e8e8e" stroke-width="1.05"/>
<line x1="377.90" y1="319.95" x2="512.20" y2="319.95" stroke="#8e8e8e" stroke-width="1.05"/>
<line x1="377.90" y1="98.70" x2="512.20" y2="98.70" stroke="#a6a6a6" stroke-width="1.15"/>
<line x1="512.20" y1="98.70" x2="512.20" y2="369.20" stroke="#a6a6a6" stroke-width="1.15"/>
<line x1="377.90" y1="98.70" x2="377.90" y2="369.20" stroke="#a6a6a6" stroke-width="1.3"/>
<line x1="377.90" y1="364.20" x2="512.20" y2="364.20" stroke="#a6a6a6" stroke-width="1.15"/>
<line x1="371.60" y1="98.70" x2="377.30" y2="98.70" stroke="#e0e0e0" stroke-width="1.1"/>
<text x="371.8" y="104.7" font-size="12.5" fill="#dcdcdc" text-anchor="end">15</text>
<line x1="371.60" y1="142.95" x2="377.30" y2="142.95" stroke="#e0e0e0" stroke-width="1.1"/>
<text x="371.8" y="148.9" font-size="12.5" fill="#dcdcdc" text-anchor="end">10</text>
<line x1="371.60" y1="187.20" x2="377.30" y2="187.20" stroke="#e0e0e0" stroke-width="1.1"/>
<text x="371.8" y="193.2" font-size="12.5" fill="#dcdcdc" text-anchor="end">5</text>
<line x1="371.60" y1="231.45" x2="377.30" y2="231.45" stroke="#e0e0e0" stroke-width="1.1"/>
<text x="371.8" y="237.4" font-size="12.5" fill="#dcdcdc" text-anchor="end">0</text>
<line x1="371.60" y1="275.70" x2="377.30" y2="275.70" stroke="#e0e0e0" stroke-width="1.1"/>
<text x="371.8" y="281.7" font-size="12.5" fill="#dcdcdc" text-anchor="end">-5</text>
<line x1="371.60" y1="319.95" x2="377.30" y2="319.95" stroke="#e0e0e0" stroke-width="1.1"/>
<text x="371.8" y="325.9" font-size="12.5" fill="#dcdcdc" text-anchor="end">-10</text>
<line x1="371.60" y1="364.20" x2="377.30" y2="364.20" stroke="#e0e0e0" stroke-width="1.1"/>
<text x="371.8" y="370.2" font-size="12.5" fill="#dcdcdc" text-anchor="end">-15</text>
<text x="432.5" y="92.5" font-size="12.5" fill="#dcdcdc" text-anchor="middle" textLength="43.5" lengthAdjust="spacingAndGlyphs">Delta L</text>
<text x="445.1" y="378.8" font-size="12.5" fill="#dcdcdc" text-anchor="middle" textLength="32.8" lengthAdjust="spacingAndGlyphs">100%</text>
<rect x="391.50" y="230.56" width="107.10" height="48.23" fill="#000"/>
<rect x="392.50" y="231.56" width="105.10" height="46.23" fill="url(#ybar)"/>
<rect x="562.50" y="98.70" width="134.90" height="265.50" fill="#242424"/>
<line x1="562.50" y1="142.95" x2="697.40" y2="142.95" stroke="#8e8e8e" stroke-width="1.05"/>
<line x1="562.50" y1="187.20" x2="697.40" y2="187.20" stroke="#8e8e8e" stroke-width="1.05"/>
<line x1="562.50" y1="231.45" x2="697.40" y2="231.45" stroke="#8e8e8e" stroke-width="1.05"/>
<line x1="562.50" y1="275.70" x2="697.40" y2="275.70" stroke="#8e8e8e" stroke-width="1.05"/>
<line x1="562.50" y1="319.95" x2="697.40" y2="319.95" stroke="#8e8e8e" stroke-width="1.05"/>
<line x1="562.50" y1="98.70" x2="697.40" y2="98.70" stroke="#a6a6a6" stroke-width="1.15"/>
<line x1="697.40" y1="98.70" x2="697.40" y2="369.20" stroke="#a6a6a6" stroke-width="1.15"/>
<line x1="562.50" y1="98.70" x2="562.50" y2="369.20" stroke="#a6a6a6" stroke-width="1.3"/>
<line x1="562.50" y1="364.20" x2="697.40" y2="364.20" stroke="#a6a6a6" stroke-width="1.15"/>
<line x1="556.20" y1="98.70" x2="561.90" y2="98.70" stroke="#e0e0e0" stroke-width="1.1"/>
<text x="556.4" y="104.7" font-size="12.5" fill="#dcdcdc" text-anchor="end">15</text>
<line x1="556.20" y1="142.95" x2="561.90" y2="142.95" stroke="#e0e0e0" stroke-width="1.1"/>
<text x="556.4" y="148.9" font-size="12.5" fill="#dcdcdc" text-anchor="end">10</text>
<line x1="556.20" y1="187.20" x2="561.90" y2="187.20" stroke="#e0e0e0" stroke-width="1.1"/>
<text x="556.4" y="193.2" font-size="12.5" fill="#dcdcdc" text-anchor="end">5</text>
<line x1="556.20" y1="231.45" x2="561.90" y2="231.45" stroke="#e0e0e0" stroke-width="1.1"/>
<text x="556.4" y="237.4" font-size="12.5" fill="#dcdcdc" text-anchor="end">0</text>
<line x1="556.20" y1="275.70" x2="561.90" y2="275.70" stroke="#e0e0e0" stroke-width="1.1"/>
<text x="556.4" y="281.7" font-size="12.5" fill="#dcdcdc" text-anchor="end">-5</text>
<line x1="556.20" y1="319.95" x2="561.90" y2="319.95" stroke="#e0e0e0" stroke-width="1.1"/>
<text x="556.4" y="325.9" font-size="12.5" fill="#dcdcdc" text-anchor="end">-10</text>
<line x1="556.20" y1="364.20" x2="561.90" y2="364.20" stroke="#e0e0e0" stroke-width="1.1"/>
<text x="556.4" y="370.2" font-size="12.5" fill="#dcdcdc" text-anchor="end">-15</text>
<text x="617.5" y="92.5" font-size="12.5" fill="#dcdcdc" text-anchor="middle" textLength="43.5" lengthAdjust="spacingAndGlyphs">Delta C</text>
<text x="630.0" y="378.8" font-size="12.5" fill="#dcdcdc" text-anchor="middle" textLength="32.8" lengthAdjust="spacingAndGlyphs">100%</text>
<rect x="576.10" y="209.32" width="107.70" height="22.12" fill="#000"/>
<rect x="577.10" y="210.32" width="105.70" height="20.12" fill="url(#ybar)"/>
<rect x="747.60" y="98.70" width="136.00" height="265.50" fill="#242424"/>
<line x1="747.60" y1="142.95" x2="883.60" y2="142.95" stroke="#8e8e8e" stroke-width="1.05"/>
<line x1="747.60" y1="187.20" x2="883.60" y2="187.20" stroke="#8e8e8e" stroke-width="1.05"/>
<line x1="747.60" y1="231.45" x2="883.60" y2="231.45" stroke="#8e8e8e" stroke-width="1.05"/>
<line x1="747.60" y1="275.70" x2="883.60" y2="275.70" stroke="#8e8e8e" stroke-width="1.05"/>
<line x1="747.60" y1="319.95" x2="883.60" y2="319.95" stroke="#8e8e8e" stroke-width="1.05"/>
<line x1="747.60" y1="98.70" x2="883.60" y2="98.70" stroke="#a6a6a6" stroke-width="1.15"/>
<line x1="883.60" y1="98.70" x2="883.60" y2="369.20" stroke="#a6a6a6" stroke-width="1.15"/>
<line x1="747.60" y1="98.70" x2="747.60" y2="369.20" stroke="#a6a6a6" stroke-width="1.3"/>
<line x1="747.60" y1="364.20" x2="883.60" y2="364.20" stroke="#a6a6a6" stroke-width="1.15"/>
<line x1="741.30" y1="98.70" x2="747.00" y2="98.70" stroke="#e0e0e0" stroke-width="1.1"/>
<text x="741.5" y="104.7" font-size="12.5" fill="#dcdcdc" text-anchor="end">15</text>
<line x1="741.30" y1="142.95" x2="747.00" y2="142.95" stroke="#e0e0e0" stroke-width="1.1"/>
<text x="741.5" y="148.9" font-size="12.5" fill="#dcdcdc" text-anchor="end">10</text>
<line x1="741.30" y1="187.20" x2="747.00" y2="187.20" stroke="#e0e0e0" stroke-width="1.1"/>
<text x="741.5" y="193.2" font-size="12.5" fill="#dcdcdc" text-anchor="end">5</text>
<line x1="741.30" y1="231.45" x2="747.00" y2="231.45" stroke="#e0e0e0" stroke-width="1.1"/>
<text x="741.5" y="237.4" font-size="12.5" fill="#dcdcdc" text-anchor="end">0</text>
<line x1="741.30" y1="275.70" x2="747.00" y2="275.70" stroke="#e0e0e0" stroke-width="1.1"/>
<text x="741.5" y="281.7" font-size="12.5" fill="#dcdcdc" text-anchor="end">-5</text>
<line x1="741.30" y1="319.95" x2="747.00" y2="319.95" stroke="#e0e0e0" stroke-width="1.1"/>
<text x="741.5" y="325.9" font-size="12.5" fill="#dcdcdc" text-anchor="end">-10</text>
<line x1="741.30" y1="364.20" x2="747.00" y2="364.20" stroke="#e0e0e0" stroke-width="1.1"/>
<text x="741.5" y="370.2" font-size="12.5" fill="#dcdcdc" text-anchor="end">-15</text>
<text x="802.5" y="92.5" font-size="12.5" fill="#dcdcdc" text-anchor="middle" textLength="43.5" lengthAdjust="spacingAndGlyphs">Delta H</text>
<text x="815.6" y="378.8" font-size="12.5" fill="#dcdcdc" text-anchor="middle" textLength="32.8" lengthAdjust="spacingAndGlyphs">100%</text>
<rect x="761.20" y="230.56" width="108.80" height="61.95" fill="#000"/>
<rect x="762.20" y="231.56" width="106.80" height="59.95" fill="url(#ybar)"/>
<rect x="346.20" y="387.80" width="554.70" height="153.00" fill="#000"/>
<rect x="365.00" y="394.00" width="93.80" height="124.70" fill="#f2f2ea"/>
<rect x="366.00" y="395.00" width="91.80" height="62.00" fill="#bfbda5"/>
<rect x="366.00" y="456.50" width="91.80" height="61.20" fill="#c0c0a5"/>
<text x="412.0" y="532.8" font-size="11.5" fill="#fff" text-anchor="middle" textLength="21.6" lengthAdjust="spacingAndGlyphs">20%</text>
<rect x="473.90" y="394.00" width="93.10" height="124.70" fill="#f2f2ea"/>
<rect x="474.90" y="395.00" width="91.10" height="62.00" fill="#bfba88"/>
<rect x="474.90" y="456.50" width="91.10" height="61.20" fill="#c0c089"/>
<text x="520.9" y="532.8" font-size="11.5" fill="#fff" text-anchor="middle" textLength="21.6" lengthAdjust="spacingAndGlyphs">40%</text>
<rect x="582.40" y="394.00" width="93.80" height="124.70" fill="#f2f2ea"/>
<rect x="583.40" y="395.00" width="91.80" height="62.00" fill="#bfb668"/>
<rect x="583.40" y="456.50" width="91.80" height="61.20" fill="#c0c069"/>
<text x="629.4" y="532.8" font-size="11.5" fill="#fff" text-anchor="middle" textLength="21.6" lengthAdjust="spacingAndGlyphs">60%</text>
<rect x="691.20" y="394.00" width="92.70" height="124.70" fill="#f2f2ea"/>
<rect x="692.20" y="395.00" width="90.70" height="62.00" fill="#bfb142"/>
<rect x="692.20" y="456.50" width="90.70" height="61.20" fill="#c0c042"/>
<text x="738.2" y="532.8" font-size="11.5" fill="#fff" text-anchor="middle" textLength="21.6" lengthAdjust="spacingAndGlyphs">80%</text>
<rect x="800.00" y="394.00" width="92.90" height="124.70" fill="#f2f2ea"/>
<rect x="801.00" y="395.00" width="90.90" height="62.00" fill="#bfac00"/>
<rect x="801.00" y="456.50" width="90.90" height="61.20" fill="#c0c017"/>
<text x="847.0" y="532.8" font-size="11.5" fill="#fff" text-anchor="middle" textLength="28.0" lengthAdjust="spacingAndGlyphs">100%</text>
<text transform="translate(359,437.8) rotate(-90)" font-size="12.5" fill="#fff" textLength="32" lengthAdjust="spacingAndGlyphs">Actual</text>
<text transform="translate(359,507.8) rotate(-90)" font-size="12.5" fill="#fff" textLength="32.4" lengthAdjust="spacingAndGlyphs">Target</text>
<text x="41.9" y="584.0" font-size="26.5" fill="#f2f2f2" textLength="217.9" lengthAdjust="spacingAndGlyphs">Avg dE2000: 6,61</text>
<text x="30.4" y="621.2" font-size="26.5" fill="#f2f2f2" textLength="241.2" lengthAdjust="spacingAndGlyphs">Max dE2000: 15,83</text>
<text x="8.3" y="666.0" font-size="26" fill="#f2f2f2" textLength="204.9" lengthAdjust="spacingAndGlyphs">Current Reading</text>
<text x="8.3" y="699.4" font-size="21.5" fill="#f2f2f2" textLength="95.7" lengthAdjust="spacingAndGlyphs">x: 0,4368</text>
<text x="155.6" y="699.4" font-size="21.5" fill="#f2f2f2" textLength="95.7" lengthAdjust="spacingAndGlyphs">y: 0,4988</text>
<text x="8.3" y="737.0" font-size="21.5" fill="#f2f2f2" textLength="89.1" lengthAdjust="spacingAndGlyphs">fL: 32,07</text>
<text x="8.3" y="769.4" font-size="21.5" fill="#f2f2f2" textLength="149.1" lengthAdjust="spacingAndGlyphs">cd/m²: 109,88</text>
<rect x="329.90" y="590.60" width="233.50" height="168.50" fill="#242424"/>
<line x1="329.90" y1="632.73" x2="563.40" y2="632.73" stroke="#8e8e8e" stroke-width="1.05"/>
<line x1="329.90" y1="674.85" x2="563.40" y2="674.85" stroke="#8e8e8e" stroke-width="1.05"/>
<line x1="329.90" y1="716.98" x2="563.40" y2="716.98" stroke="#8e8e8e" stroke-width="1.05"/>
<line x1="329.90" y1="590.60" x2="563.40" y2="590.60" stroke="#a6a6a6" stroke-width="1.15"/>
<line x1="563.40" y1="590.60" x2="563.40" y2="764.10" stroke="#a6a6a6" stroke-width="1.15"/>
<rect x="351.80" y="685.70" width="62.40" height="73.40" fill="#000"/>
<rect x="352.80" y="686.70" width="60.40" height="72.40" fill="url(#rr)"/>
<rect x="414.10" y="730.70" width="62.40" height="28.40" fill="#000"/>
<rect x="415.10" y="731.70" width="60.40" height="27.40" fill="#55aa55"/>
<rect x="476.90" y="732.80" width="62.70" height="26.30" fill="#000"/>
<rect x="477.90" y="733.80" width="60.70" height="25.30" fill="#5555ff"/>
<line x1="329.90" y1="590.60" x2="329.90" y2="764.10" stroke="#a6a6a6" stroke-width="1.3"/>
<line x1="329.90" y1="759.10" x2="563.40" y2="759.10" stroke="#a6a6a6" stroke-width="1.15"/>
<line x1="323.40" y1="590.60" x2="329.30" y2="590.60" stroke="#e6e6e6" stroke-width="1.4"/>
<text x="322.4" y="596.0" font-size="12.5" fill="#dcdcdc" text-anchor="end">110</text>
<line x1="323.40" y1="632.73" x2="329.30" y2="632.73" stroke="#e6e6e6" stroke-width="1.4"/>
<text x="322.4" y="638.1" font-size="12.5" fill="#dcdcdc" text-anchor="end">105</text>
<line x1="323.40" y1="674.85" x2="329.30" y2="674.85" stroke="#e6e6e6" stroke-width="1.4"/>
<text x="322.4" y="680.2" font-size="12.5" fill="#dcdcdc" text-anchor="end">100</text>
<line x1="323.40" y1="716.98" x2="329.30" y2="716.98" stroke="#e6e6e6" stroke-width="1.4"/>
<text x="322.4" y="722.4" font-size="12.5" fill="#dcdcdc" text-anchor="end">95</text>
<line x1="323.40" y1="759.10" x2="329.30" y2="759.10" stroke="#e6e6e6" stroke-width="1.4"/>
<text x="322.4" y="764.5" font-size="12.5" fill="#dcdcdc" text-anchor="end">90</text>
<text x="432.2" y="584.5" font-size="12.5" fill="#dcdcdc" text-anchor="middle" textLength="77.7" lengthAdjust="spacingAndGlyphs">RGB Balance</text>
<text x="446.6" y="773.7" font-size="12.5" fill="#dcdcdc" text-anchor="middle" textLength="32.7" lengthAdjust="spacingAndGlyphs">100%</text>
<rect x="582.20" y="559.40" width="685.10" height="222.30" fill="#1c1c1c"/>
<rect x="583.20" y="560.40" width="683.10" height="27.20" fill="url(#th)"/>
<rect x="583.20" y="587.60" width="683.10" height="24.00" fill="#404040"/>
<rect x="583.20" y="611.60" width="683.10" height="24.20" fill="#808080"/>
<rect x="583.20" y="635.80" width="683.10" height="24.20" fill="#404040"/>
<rect x="583.20" y="660.00" width="683.10" height="24.70" fill="#808080"/>
<rect x="583.20" y="684.70" width="683.10" height="24.20" fill="#404040"/>
<rect x="583.20" y="708.90" width="683.10" height="24.20" fill="#808080"/>
<rect x="583.20" y="733.10" width="683.10" height="24.00" fill="#404040"/>
<rect x="583.20" y="757.10" width="683.10" height="23.60" fill="#808080"/>
<g style="filter:drop-shadow(.8px .9px 0 rgba(0,0,0,.5))">
<text x="816.4" y="580.0" font-size="13" fill="#fff" text-anchor="middle" textLength="36.7" lengthAdjust="spacingAndGlyphs" font-weight="bold">20%</text>
<text x="916.4" y="580.0" font-size="13" fill="#fff" text-anchor="middle" textLength="36.7" lengthAdjust="spacingAndGlyphs" font-weight="bold">40%</text>
<text x="1016.4" y="580.0" font-size="13" fill="#fff" text-anchor="middle" textLength="36.7" lengthAdjust="spacingAndGlyphs" font-weight="bold">60%</text>
<text x="1116.4" y="580.0" font-size="13" fill="#fff" text-anchor="middle" textLength="36.7" lengthAdjust="spacingAndGlyphs" font-weight="bold">80%</text>
<text x="1216.4" y="580.0" font-size="13" fill="#fff" text-anchor="middle" textLength="48.2" lengthAdjust="spacingAndGlyphs" font-weight="bold">100%</text>
<text x="601.4" y="605.8" font-size="14.5" fill="#fff" textLength="79.7" lengthAdjust="spacingAndGlyphs" font-weight="bold">x: CIE31</text>
<text x="772.3" y="605.8" font-size="15" fill="#f8f8f8" textLength="63.9" lengthAdjust="spacingAndGlyphs">0,3330</text>
<text x="872.2" y="605.8" font-size="15" fill="#f8f8f8" textLength="63.9" lengthAdjust="spacingAndGlyphs">0,3557</text>
<text x="972.1" y="605.8" font-size="15" fill="#f8f8f8" textLength="63.9" lengthAdjust="spacingAndGlyphs">0,3792</text>
<text x="1072.0" y="605.8" font-size="15" fill="#f8f8f8" textLength="63.9" lengthAdjust="spacingAndGlyphs">0,4040</text>
<text x="1171.9" y="605.8" font-size="15" fill="#f8f8f8" textLength="63.9" lengthAdjust="spacingAndGlyphs">0,4368</text>
<text x="601.4" y="629.8" font-size="14.5" fill="#fff" textLength="79.7" lengthAdjust="spacingAndGlyphs" font-weight="bold">y: CIE31</text>
<text x="772.3" y="629.8" font-size="15" fill="#f8f8f8" textLength="63.9" lengthAdjust="spacingAndGlyphs">0,3571</text>
<text x="872.2" y="629.8" font-size="15" fill="#f8f8f8" textLength="63.9" lengthAdjust="spacingAndGlyphs">0,3881</text>
<text x="972.1" y="629.8" font-size="15" fill="#f8f8f8" textLength="63.9" lengthAdjust="spacingAndGlyphs">0,4202</text>
<text x="1072.0" y="629.8" font-size="15" fill="#f8f8f8" textLength="63.9" lengthAdjust="spacingAndGlyphs">0,4540</text>
<text x="1171.9" y="629.8" font-size="15" fill="#f8f8f8" textLength="63.9" lengthAdjust="spacingAndGlyphs">0,4988</text>
<text x="601.4" y="654.0" font-size="14.5" fill="#fff" textLength="11.7" lengthAdjust="spacingAndGlyphs" font-weight="bold">Y</text>
<text x="772.9" y="654.0" font-size="15" fill="#f8f8f8" textLength="86.8" lengthAdjust="spacingAndGlyphs">135,1956</text>
<text x="872.8" y="654.0" font-size="15" fill="#f8f8f8" textLength="86.8" lengthAdjust="spacingAndGlyphs">128,3806</text>
<text x="972.7" y="654.0" font-size="15" fill="#f8f8f8" textLength="86.8" lengthAdjust="spacingAndGlyphs">122,8119</text>
<text x="1072.6" y="654.0" font-size="15" fill="#f8f8f8" textLength="86.8" lengthAdjust="spacingAndGlyphs">117,9266</text>
<text x="1172.5" y="654.0" font-size="15" fill="#f8f8f8" textLength="86.8" lengthAdjust="spacingAndGlyphs">109,8850</text>
<text x="601.4" y="678.2" font-size="14.5" fill="#fff" textLength="146.3" lengthAdjust="spacingAndGlyphs" font-weight="bold">Target x:CIE31</text>
<text x="772.3" y="678.2" font-size="15" fill="#f8f8f8" textLength="63.9" lengthAdjust="spacingAndGlyphs">0,3344</text>
<text x="872.2" y="678.2" font-size="15" fill="#f8f8f8" textLength="63.9" lengthAdjust="spacingAndGlyphs">0,3564</text>
<text x="972.1" y="678.2" font-size="15" fill="#f8f8f8" textLength="63.9" lengthAdjust="spacingAndGlyphs">0,3773</text>
<text x="1072.0" y="678.2" font-size="15" fill="#f8f8f8" textLength="63.9" lengthAdjust="spacingAndGlyphs">0,3969</text>
<text x="1171.9" y="678.2" font-size="15" fill="#f8f8f8" textLength="63.9" lengthAdjust="spacingAndGlyphs">0,4193</text>
<text x="601.4" y="702.9" font-size="14.5" fill="#fff" textLength="146.3" lengthAdjust="spacingAndGlyphs" font-weight="bold">Target y:CIE31</text>
<text x="772.3" y="702.9" font-size="15" fill="#f8f8f8" textLength="63.9" lengthAdjust="spacingAndGlyphs">0,3648</text>
<text x="872.2" y="702.9" font-size="15" fill="#f8f8f8" textLength="63.9" lengthAdjust="spacingAndGlyphs">0,4013</text>
<text x="972.1" y="702.9" font-size="15" fill="#f8f8f8" textLength="63.9" lengthAdjust="spacingAndGlyphs">0,4358</text>
<text x="1072.0" y="702.9" font-size="15" fill="#f8f8f8" textLength="63.9" lengthAdjust="spacingAndGlyphs">0,4682</text>
<text x="1171.9" y="702.9" font-size="15" fill="#f8f8f8" textLength="63.9" lengthAdjust="spacingAndGlyphs">0,5053</text>
<text x="601.4" y="727.1" font-size="14.5" fill="#fff" textLength="84.3" lengthAdjust="spacingAndGlyphs" font-weight="bold">Target Y</text>
<text x="772.9" y="727.1" font-size="15" fill="#f8f8f8" textLength="86.8" lengthAdjust="spacingAndGlyphs">138,7132</text>
<text x="872.8" y="727.1" font-size="15" fill="#f8f8f8" textLength="86.8" lengthAdjust="spacingAndGlyphs">136,2783</text>
<text x="972.7" y="727.1" font-size="15" fill="#f8f8f8" textLength="86.8" lengthAdjust="spacingAndGlyphs">134,4075</text>
<text x="1072.6" y="727.1" font-size="15" fill="#f8f8f8" textLength="86.8" lengthAdjust="spacingAndGlyphs">132,9393</text>
<text x="1172.5" y="727.1" font-size="15" fill="#f8f8f8" textLength="86.8" lengthAdjust="spacingAndGlyphs">131,5199</text>
<text x="601.4" y="751.3" font-size="14.5" fill="#fff" textLength="83.7" lengthAdjust="spacingAndGlyphs" font-weight="bold">ΔE 2000</text>
<text x="772.3" y="751.3" font-size="15" fill="#f8f8f8" textLength="63.9" lengthAdjust="spacingAndGlyphs">2,8999</text>
<text x="872.2" y="751.3" font-size="15" fill="#f8f8f8" textLength="63.9" lengthAdjust="spacingAndGlyphs">3,6941</text>
<text x="972.1" y="751.3" font-size="15" fill="#f8f8f8" textLength="63.9" lengthAdjust="spacingAndGlyphs">4,1722</text>
<text x="1072.0" y="751.3" font-size="15" fill="#f8f8f8" textLength="63.9" lengthAdjust="spacingAndGlyphs">4,5984</text>
<text x="1171.9" y="751.3" font-size="15" fill="#f8f8f8" textLength="63.9" lengthAdjust="spacingAndGlyphs">5,5877</text>
<text x="601.4" y="775.3" font-size="14.5" fill="#fff" textLength="66.1" lengthAdjust="spacingAndGlyphs" font-weight="bold">ΔE ITP</text>
<text x="772.3" y="775.3" font-size="15" fill="#f8f8f8" textLength="63.9" lengthAdjust="spacingAndGlyphs">3,6520</text>
<text x="872.2" y="775.3" font-size="15" fill="#f8f8f8" textLength="63.9" lengthAdjust="spacingAndGlyphs">7,1937</text>
<text x="972.1" y="775.3" font-size="15" fill="#f8f8f8" textLength="63.9" lengthAdjust="spacingAndGlyphs">9,9629</text>
<text x="1072.6" y="775.3" font-size="15" fill="#f8f8f8" textLength="75.9" lengthAdjust="spacingAndGlyphs">11,8376</text>
<text x="1172.5" y="775.3" font-size="15" fill="#f8f8f8" textLength="75.9" lengthAdjust="spacingAndGlyphs">15,8504</text>
</g>
<rect x="907.80" y="29.90" width="700.00" height="7.10" fill="#c4c402"/>
<rect x="907.80" y="29.90" width="6.50" height="523.80" fill="#c4c402"/>
<rect x="907.80" y="546.80" width="700.00" height="7.20" fill="#c4c402"/>
<text x="1233.0" y="54.1" font-size="13" fill="#dcdcdc" text-anchor="middle" textLength="78.0" lengthAdjust="spacingAndGlyphs">CIE 1976 u'v'</text>
<line x1="949.80" y1="58.60" x2="1550.00" y2="58.60" stroke="#a6a6a6" stroke-width="1.1"/>
<line x1="949.80" y1="58.60" x2="949.80" y2="525.20" stroke="#a6a6a6" stroke-width="1.25"/>
<line x1="949.80" y1="520.20" x2="1550.00" y2="520.20" stroke="#a6a6a6" stroke-width="1.25"/>
<line x1="1549.30" y1="58.60" x2="1549.30" y2="525.20" stroke="#a6a6a6" stroke-width="1.1"/>
<line x1="943.60" y1="520.50" x2="949.20" y2="520.50" stroke="#e6e6e6" stroke-width="1.4"/>
<text x="943.2" y="526.1" font-size="12.5" fill="#dcdcdc" text-anchor="end">0</text>
<line x1="949.70" y1="520.20" x2="949.70" y2="525.70" stroke="#e0e0e0" stroke-width="1.4"/>
<text x="949.4" y="541.2" font-size="12.5" fill="#dcdcdc" text-anchor="middle">0</text>
<line x1="943.60" y1="482.10" x2="949.20" y2="482.10" stroke="#e6e6e6" stroke-width="1.4"/>
<text x="943.2" y="487.7" font-size="12.5" fill="#dcdcdc" text-anchor="end" textLength="26.9" lengthAdjust="spacingAndGlyphs">0,05</text>
<line x1="999.57" y1="520.20" x2="999.57" y2="525.70" stroke="#e0e0e0" stroke-width="1.4"/>
<text x="999.3" y="541.2" font-size="12.5" fill="#dcdcdc" text-anchor="middle" textLength="26.9" lengthAdjust="spacingAndGlyphs">0,05</text>
<line x1="943.60" y1="443.70" x2="949.20" y2="443.70" stroke="#e6e6e6" stroke-width="1.4"/>
<text x="943.2" y="449.3" font-size="12.5" fill="#dcdcdc" text-anchor="end" textLength="19.6" lengthAdjust="spacingAndGlyphs">0,1</text>
<line x1="1049.44" y1="520.20" x2="1049.44" y2="525.70" stroke="#e0e0e0" stroke-width="1.4"/>
<text x="1049.1" y="541.2" font-size="12.5" fill="#dcdcdc" text-anchor="middle" textLength="19.6" lengthAdjust="spacingAndGlyphs">0,1</text>
<line x1="943.60" y1="405.30" x2="949.20" y2="405.30" stroke="#e6e6e6" stroke-width="1.4"/>
<text x="943.2" y="410.9" font-size="12.5" fill="#dcdcdc" text-anchor="end" textLength="26.9" lengthAdjust="spacingAndGlyphs">0,15</text>
<line x1="1099.31" y1="520.20" x2="1099.31" y2="525.70" stroke="#e0e0e0" stroke-width="1.4"/>
<text x="1099.0" y="541.2" font-size="12.5" fill="#dcdcdc" text-anchor="middle" textLength="26.9" lengthAdjust="spacingAndGlyphs">0,15</text>
<line x1="943.60" y1="366.90" x2="949.20" y2="366.90" stroke="#e6e6e6" stroke-width="1.4"/>
<text x="943.2" y="372.5" font-size="12.5" fill="#dcdcdc" text-anchor="end" textLength="19.6" lengthAdjust="spacingAndGlyphs">0,2</text>
<line x1="1149.18" y1="520.20" x2="1149.18" y2="525.70" stroke="#e0e0e0" stroke-width="1.4"/>
<text x="1148.9" y="541.2" font-size="12.5" fill="#dcdcdc" text-anchor="middle" textLength="19.6" lengthAdjust="spacingAndGlyphs">0,2</text>
<line x1="943.60" y1="328.50" x2="949.20" y2="328.50" stroke="#e6e6e6" stroke-width="1.4"/>
<text x="943.2" y="334.1" font-size="12.5" fill="#dcdcdc" text-anchor="end" textLength="26.9" lengthAdjust="spacingAndGlyphs">0,25</text>
<line x1="1199.05" y1="520.20" x2="1199.05" y2="525.70" stroke="#e0e0e0" stroke-width="1.4"/>
<text x="1198.8" y="541.2" font-size="12.5" fill="#dcdcdc" text-anchor="middle" textLength="26.9" lengthAdjust="spacingAndGlyphs">0,25</text>
<line x1="943.60" y1="290.10" x2="949.20" y2="290.10" stroke="#e6e6e6" stroke-width="1.4"/>
<text x="943.2" y="295.7" font-size="12.5" fill="#dcdcdc" text-anchor="end" textLength="19.6" lengthAdjust="spacingAndGlyphs">0,3</text>
<line x1="1248.92" y1="520.20" x2="1248.92" y2="525.70" stroke="#e0e0e0" stroke-width="1.4"/>
<text x="1248.6" y="541.2" font-size="12.5" fill="#dcdcdc" text-anchor="middle" textLength="19.6" lengthAdjust="spacingAndGlyphs">0,3</text>
<line x1="943.60" y1="251.70" x2="949.20" y2="251.70" stroke="#e6e6e6" stroke-width="1.4"/>
<text x="943.2" y="257.3" font-size="12.5" fill="#dcdcdc" text-anchor="end" textLength="26.9" lengthAdjust="spacingAndGlyphs">0,35</text>
<line x1="1298.79" y1="520.20" x2="1298.79" y2="525.70" stroke="#e0e0e0" stroke-width="1.4"/>
<text x="1298.5" y="541.2" font-size="12.5" fill="#dcdcdc" text-anchor="middle" textLength="26.9" lengthAdjust="spacingAndGlyphs">0,35</text>
<line x1="943.60" y1="213.30" x2="949.20" y2="213.30" stroke="#e6e6e6" stroke-width="1.4"/>
<text x="943.2" y="218.9" font-size="12.5" fill="#dcdcdc" text-anchor="end" textLength="19.6" lengthAdjust="spacingAndGlyphs">0,4</text>
<line x1="1348.66" y1="520.20" x2="1348.66" y2="525.70" stroke="#e0e0e0" stroke-width="1.4"/>
<text x="1348.4" y="541.2" font-size="12.5" fill="#dcdcdc" text-anchor="middle" textLength="19.6" lengthAdjust="spacingAndGlyphs">0,4</text>
<line x1="943.60" y1="174.90" x2="949.20" y2="174.90" stroke="#e6e6e6" stroke-width="1.4"/>
<text x="943.2" y="180.5" font-size="12.5" fill="#dcdcdc" text-anchor="end" textLength="26.9" lengthAdjust="spacingAndGlyphs">0,45</text>
<line x1="1398.53" y1="520.20" x2="1398.53" y2="525.70" stroke="#e0e0e0" stroke-width="1.4"/>
<text x="1398.2" y="541.2" font-size="12.5" fill="#dcdcdc" text-anchor="middle" textLength="26.9" lengthAdjust="spacingAndGlyphs">0,45</text>
<line x1="943.60" y1="136.50" x2="949.20" y2="136.50" stroke="#e6e6e6" stroke-width="1.4"/>
<text x="943.2" y="142.1" font-size="12.5" fill="#dcdcdc" text-anchor="end" textLength="19.6" lengthAdjust="spacingAndGlyphs">0,5</text>
<line x1="1448.40" y1="520.20" x2="1448.40" y2="525.70" stroke="#e0e0e0" stroke-width="1.4"/>
<text x="1448.1" y="541.2" font-size="12.5" fill="#dcdcdc" text-anchor="middle" textLength="19.6" lengthAdjust="spacingAndGlyphs">0,5</text>
<line x1="943.60" y1="98.10" x2="949.20" y2="98.10" stroke="#e6e6e6" stroke-width="1.4"/>
<text x="943.2" y="103.7" font-size="12.5" fill="#dcdcdc" text-anchor="end" textLength="26.9" lengthAdjust="spacingAndGlyphs">0,55</text>
<line x1="1498.27" y1="520.20" x2="1498.27" y2="525.70" stroke="#e0e0e0" stroke-width="1.4"/>
<text x="1498.0" y="541.2" font-size="12.5" fill="#dcdcdc" text-anchor="middle" textLength="26.9" lengthAdjust="spacingAndGlyphs">0,55</text>
<rect x="1185.0" y="144.8" width="13.7" height="13.7" fill="none" stroke="#fff" stroke-width="1.25" stroke-opacity="0.88"/>
<rect x="1234.9" y="136.3" width="13.7" height="13.7" fill="none" stroke="#fff" stroke-width="1.25" stroke-opacity="0.88"/>
<rect x="1281.0" y="129.2" width="13.7" height="13.7" fill="none" stroke="#fff" stroke-width="1.25" stroke-opacity="0.88"/>
<rect x="1331.8" y="120.1" width="13.7" height="13.7" fill="none" stroke="#fff" stroke-width="1.25" stroke-opacity="0.88"/>
<rect x="1391.7" y="110.0" width="13.7" height="13.7" fill="none" stroke="#fff" stroke-width="1.25" stroke-opacity="0.88"/>
<rect x="1120.1" y="132.2" width="13.7" height="13.7" fill="none" stroke="#fff" stroke-width="1.25" stroke-opacity="0.88"/>
<rect x="1104.1" y="117.1" width="13.7" height="13.7" fill="none" stroke="#fff" stroke-width="1.25" stroke-opacity="0.88"/>
<rect x="1089.6" y="103.1" width="13.7" height="13.7" fill="none" stroke="#fff" stroke-width="1.25" stroke-opacity="0.88"/>
<rect x="1078.2" y="91.0" width="13.7" height="13.7" fill="none" stroke="#fff" stroke-width="1.25" stroke-opacity="0.88"/>
<rect x="1066.9" y="80.2" width="13.7" height="13.7" fill="none" stroke="#fff" stroke-width="1.25" stroke-opacity="0.88"/>
<rect x="1137.1" y="180.2" width="13.7" height="13.7" fill="none" stroke="#fff" stroke-width="1.25" stroke-opacity="0.88"/>
<rect x="1134.2" y="215.2" width="13.7" height="13.7" fill="none" stroke="#fff" stroke-width="1.25" stroke-opacity="0.88"/>
<rect x="1130.2" y="257.0" width="13.7" height="13.7" fill="none" stroke="#fff" stroke-width="1.25" stroke-opacity="0.88"/>
<rect x="1125.1" y="310.8" width="13.7" height="13.7" fill="none" stroke="#fff" stroke-width="1.25" stroke-opacity="0.88"/>
<rect x="1118.0" y="390.9" width="13.7" height="13.7" fill="none" stroke="#fff" stroke-width="1.25" stroke-opacity="0.88"/>
<rect x="1128.2" y="154.3" width="13.7" height="13.7" fill="none" stroke="#fff" stroke-width="1.25" stroke-opacity="0.88"/>
<rect x="1116.1" y="155.8" width="13.7" height="13.7" fill="none" stroke="#fff" stroke-width="1.25" stroke-opacity="0.88"/>
<rect x="1104.9" y="158.5" width="13.7" height="13.7" fill="none" stroke="#fff" stroke-width="1.25" stroke-opacity="0.88"/>
<rect x="1091.8" y="160.1" width="13.7" height="13.7" fill="none" stroke="#fff" stroke-width="1.25" stroke-opacity="0.88"/>
<rect x="1081.1" y="163.2" width="13.7" height="13.7" fill="none" stroke="#fff" stroke-width="1.25" stroke-opacity="0.88"/>
<rect x="1156.4" y="167.8" width="13.7" height="13.7" fill="none" stroke="#fff" stroke-width="1.25" stroke-opacity="0.88"/>
<rect x="1174.2" y="186.1" width="13.7" height="13.7" fill="none" stroke="#fff" stroke-width="1.25" stroke-opacity="0.88"/>
<rect x="1192.1" y="205.1" width="13.7" height="13.7" fill="none" stroke="#fff" stroke-width="1.25" stroke-opacity="0.88"/>
<rect x="1216.1" y="229.2" width="13.7" height="13.7" fill="none" stroke="#fff" stroke-width="1.25" stroke-opacity="0.88"/>
<rect x="1247.2" y="257.9" width="13.7" height="13.7" fill="none" stroke="#fff" stroke-width="1.25" stroke-opacity="0.88"/>
<rect x="1141.7" y="136.2" width="13.7" height="13.7" fill="none" stroke="#fff" stroke-width="1.25" stroke-opacity="0.88"/>
<rect x="1143.0" y="121.5" width="13.7" height="13.7" fill="none" stroke="#fff" stroke-width="1.25" stroke-opacity="0.88"/>
<rect x="1144.2" y="109.1" width="13.7" height="13.7" fill="none" stroke="#fff" stroke-width="1.25" stroke-opacity="0.88"/>
<rect x="1145.2" y="98.5" width="13.7" height="13.7" fill="none" stroke="#fff" stroke-width="1.25" stroke-opacity="0.88"/>
<rect x="1146.2" y="87.4" width="13.7" height="13.7" fill="none" stroke="#fff" stroke-width="1.25" stroke-opacity="0.88"/>
<circle cx="1175.2" cy="151.4" r="4.0" fill="#b29a9a" stroke="#000" stroke-width="1"/>
<circle cx="1207.3" cy="142.4" r="4.0" fill="#b27f7f" stroke="#000" stroke-width="1"/>
<circle cx="1239.6" cy="135.7" r="4.0" fill="#b26161" stroke="#000" stroke-width="1"/>
<circle cx="1279.5" cy="124.4" r="4.0" fill="#b23e3e" stroke="#000" stroke-width="1"/>
<circle cx="1323.5" cy="113.5" r="4.0" fill="#b20000" stroke="#000" stroke-width="1"/>
<circle cx="1137.4" cy="142.3" r="4.0" fill="#9ab29a" stroke="#000" stroke-width="1"/>
<circle cx="1128.5" cy="127.3" r="4.0" fill="#7fb27f" stroke="#000" stroke-width="1"/>
<circle cx="1122.0" cy="114.4" r="4.0" fill="#61b261" stroke="#000" stroke-width="1"/>
<circle cx="1113.5" cy="100.5" r="4.0" fill="#3eb23e" stroke="#000" stroke-width="1"/>
<circle cx="1105.5" cy="86.4" r="4.0" fill="#00b200" stroke="#000" stroke-width="1"/>
<circle cx="1141.5" cy="179.4" r="4.0" fill="#9a9ab2" stroke="#000" stroke-width="1"/>
<circle cx="1133.5" cy="206.5" r="4.0" fill="#7f7fb2" stroke="#000" stroke-width="1"/>
<circle cx="1127.4" cy="232.3" r="4.0" fill="#6161b2" stroke="#000" stroke-width="1"/>
<circle cx="1116.5" cy="267.4" r="4.0" fill="#3e3eb2" stroke="#000" stroke-width="1"/>
<circle cx="1105.0" cy="312.2" r="4.0" fill="#0000b2" stroke="#000" stroke-width="1"/>
<circle cx="1138.7" cy="160.3" r="4.0" fill="#9ab2b2" stroke="#000" stroke-width="1"/>
<circle cx="1132.8" cy="163.2" r="4.0" fill="#7fb2b2" stroke="#000" stroke-width="1"/>
<circle cx="1123.5" cy="164.4" r="4.0" fill="#61b2b2" stroke="#000" stroke-width="1"/>
<circle cx="1115.5" cy="166.9" r="4.0" fill="#3eb2b2" stroke="#000" stroke-width="1"/>
<circle cx="1105.4" cy="168.8" r="4.0" fill="#00b2b2" stroke="#000" stroke-width="1"/>
<circle cx="1153.5" cy="170.4" r="4.0" fill="#b29ab2" stroke="#000" stroke-width="1"/>
<circle cx="1160.4" cy="183.2" r="4.0" fill="#b27fb2" stroke="#000" stroke-width="1"/>
<circle cx="1168.1" cy="196.4" r="4.0" fill="#b261b2" stroke="#000" stroke-width="1"/>
<circle cx="1178.5" cy="212.9" r="4.0" fill="#b23eb2" stroke="#000" stroke-width="1"/>
<circle cx="1191.0" cy="234.4" r="4.0" fill="#b200b2" stroke="#000" stroke-width="1"/>
<circle cx="1150.5" cy="145.4" r="4.0" fill="#b2b29a" stroke="#000" stroke-width="1"/>
<circle cx="1153.5" cy="132.5" r="4.0" fill="#b2b27f" stroke="#000" stroke-width="1"/>
<circle cx="1157.5" cy="119.4" r="4.0" fill="#b2b261" stroke="#000" stroke-width="1"/>
<circle cx="1160.5" cy="108.5" r="4.0" fill="#b2b23e" stroke="#000" stroke-width="1"/>
<circle cx="1164.7" cy="94.4" r="4.0" fill="#b2b200" stroke="#000" stroke-width="1"/>
<rect x="1139.4" y="152.4" width="13.6" height="13.6" fill="none" stroke="#000" stroke-width="1.4" stroke-opacity="1"/>
<circle cx="1146.6" cy="159.4" r="4.0" fill="#fff" stroke="#000" stroke-width="1"/>
<rect x="1342.30" y="375.60" width="205.00" height="140.20" fill="#303030"/>
<rect x="1344.50" y="377.60" width="199.90" height="135.20" fill="#7e7e7e"/>
<rect x="1345.50" y="378.60" width="198.30" height="133.60" fill="url(#ins)"/>
<path d="M1345.5 378.6h198.3v120.0L1345.5 392.1z" fill="#000" fill-opacity=".37"/>
<rect x="1436.8" y="438.6" width="12.8" height="12.8" fill="none" stroke="#fff" stroke-width="1.3" stroke-opacity="0.9"/>
<circle cx="1512.5" cy="462.7" r="3.8" fill="#c8c814" stroke="#000" stroke-width="1"/>
<rect x="0.00" y="802.40" width="1550.00" height="62.00" fill="url(#bar)"/>
<rect x="0.00" y="802.40" width="806.00" height="62.00" fill="url(#gap)"/>
<rect x="805.50" y="802.40" width="14.00" height="62.00" fill="url(#barl)"/>
<rect x="1222.00" y="802.40" width="15.20" height="62.00" fill="url(#barr)"/>
<path d="M-5.0 864V807q0-4 4-4H35.7q4 0 4 4V864z" fill="url(#tile)"/>
<circle cx="17.4" cy="812.2" r="7.2" fill="url(#cir)"/><path d="M13 813.9h8.7l-4.35-4.8z" fill="#242424"/>
<rect x="-2.00" y="828.80" width="37.10" height="30.30" fill="#ffff00" rx="3"/>
<path d="M46.0 864V807q0-4 4-4H191.8q4 0 4 4V864z" fill="url(#tile)"/>
<rect x="51.50" y="808.00" width="139.60" height="36.20" fill="#c1c1a6" stroke="#8a8a70" stroke-width="0.6" rx="3"/>
<text x="121.0" y="858.9" font-size="11" fill="#222" text-anchor="middle" textLength="20.5" lengthAdjust="spacingAndGlyphs">20%</text>
<path d="M198.0 864V807q0-4 4-4H343.8q4 0 4 4V864z" fill="url(#tile)"/>
<rect x="203.50" y="808.00" width="139.60" height="36.20" fill="#c1c189" stroke="#8a8a70" stroke-width="0.6" rx="3"/>
<text x="273.0" y="858.9" font-size="11" fill="#222" text-anchor="middle" textLength="20.5" lengthAdjust="spacingAndGlyphs">40%</text>
<path d="M350.0 864V807q0-4 4-4H495.8q4 0 4 4V864z" fill="url(#tile)"/>
<rect x="355.50" y="808.00" width="139.60" height="36.20" fill="#c1c169" stroke="#8a8a70" stroke-width="0.6" rx="3"/>
<text x="425.0" y="858.9" font-size="11" fill="#222" text-anchor="middle" textLength="20.5" lengthAdjust="spacingAndGlyphs">60%</text>
<path d="M502.0 864V807q0-4 4-4H647.8q4 0 4 4V864z" fill="url(#tile)"/>
<rect x="507.50" y="808.00" width="139.60" height="36.20" fill="#c1c143" stroke="#8a8a70" stroke-width="0.6" rx="3"/>
<text x="577.0" y="858.9" font-size="11" fill="#222" text-anchor="middle" textLength="20.5" lengthAdjust="spacingAndGlyphs">80%</text>
<path d="M654.0 864V807q0-4 4-4H799.8q4 0 4 4V864z" fill="url(#tsel)"/>
<rect x="659.00" y="807.90" width="140.00" height="36.00" fill="#c1c100" rx="3"/>
<text x="729.0" y="858.9" font-size="11.5" fill="#fff" text-anchor="middle" textLength="27.5" lengthAdjust="spacingAndGlyphs" font-weight="bold">100%</text>
<path d="M1237.1 821.1V807q0-4 4-4H1280.8q4 0 4 4V821.1z" fill="url(#ta)"/>
<rect x="1237.10" y="821.90" width="47.70" height="43.00" fill="url(#tb)"/>
<circle cx="1261.6" cy="812" r="7" fill="url(#cir2)"/><path d="M1256.9 813.9h8.7l-4.35-4.8z" fill="#2c2c2c"/>
<rect x="1246.20" y="828.20" width="29.60" height="29.20" fill="url(#glass)" stroke="#262626" stroke-width="1.8" rx="4"/>
<rect x="1254.10" y="836.10" width="13.70" height="13.40" fill="url(#blk)"/>
<rect x="1286.20" y="802.90" width="270.00" height="29.90" fill="url(#btn)"/>
<line x1="1332.20" y1="802.90" x2="1332.20" y2="832.80" stroke="#333" stroke-width="1.2"/>
<line x1="1377.40" y1="802.90" x2="1377.40" y2="832.80" stroke="#333" stroke-width="1.2"/>
<line x1="1422.20" y1="802.90" x2="1422.20" y2="832.80" stroke="#333" stroke-width="1.2"/>
<line x1="1467.40" y1="802.90" x2="1467.40" y2="832.80" stroke="#333" stroke-width="1.2"/>
<line x1="1512.40" y1="802.90" x2="1512.40" y2="832.80" stroke="#333" stroke-width="1.2"/>
<circle cx="1309.0" cy="818" r="9.9" fill="url(#cir2)"/>
<circle cx="1354.5" cy="818" r="9.9" fill="url(#cir2)"/>
<circle cx="1400.0" cy="818" r="9.9" fill="url(#cir2)"/>
<circle cx="1445.0" cy="818" r="9.9" fill="url(#cir2)"/>
<circle cx="1489.7" cy="818" r="9.9" fill="url(#cir2)"/>
<circle cx="1535.7" cy="818" r="9.9" fill="url(#cir2)"/>
<rect x="1305.10" y="814.20" width="7.70" height="7.70" fill="#2e2e2e"/>
<path d="M1351.8 813.4v10.4l8.9-5.2z" fill="#2e2e2e"/>
<path d="M1397.2 814h-2.3v8.8h2.3M1402.8 814h2.3v8.8h-2.3" fill="none" stroke="#2b2b2b" stroke-width="1.9"/><path d="M1397.8 818.3h1.5M1400.7 818.3h1.5" stroke="#2b2b2b" stroke-width="1.7"/>
<text x="1445.0" y="823.1" font-size="17" fill="#2b2b2b" text-anchor="middle" textLength="14.0" lengthAdjust="spacingAndGlyphs" font-weight="bold">∞</text>
<path d="M1484.5 817.2a5.3 5.1 0 0 1 9-2.6M1494.9 819.4a5.3 5.1 0 0 1-9 2.6" fill="none" stroke="#2b2b2b" stroke-width="2.2"/><path d="M1490.9 816.4l5.2.5-.3-5.3zM1488.5 820.2l-5.2-.5.3 5.3z" fill="#2b2b2b"/>
<path d="M1286.2 864V837.9q0-4 4-4H1422.2V864z" fill="url(#btn2)"/>
<rect x="1422.20" y="833.90" width="140.00" height="31.00" fill="url(#btn2)"/>
<line x1="1422.20" y1="833.90" x2="1422.20" y2="864.00" stroke="#333" stroke-width="1.2"/>
<line x1="1286.20" y1="833.35" x2="1550.00" y2="833.35" stroke="#2c2c2c" stroke-width="1.1"/>
<circle cx="1317" cy="849" r="9.9" fill="url(#cir2)"/><circle cx="1530" cy="849" r="9.9" fill="url(#cir2)"/>
<path d="M1316.2 844.6l-3.6 4.4 3.6 4.4M1320.6 844.6l-3.6 4.4 3.6 4.4" fill="none" stroke="#2e2e2e" stroke-width="1.3"/>
<path d="M1526.4 844.6l3.6 4.4-3.6 4.4M1530.8 844.6l3.6 4.4-3.6 4.4" fill="none" stroke="#2e2e2e" stroke-width="1.3"/>
<text x="1344.1" y="856.6" font-size="21.5" fill="#303030" textLength="49.8" lengthAdjust="spacingAndGlyphs" stroke="#303030" stroke-width=".45">Back</text>
<text x="1450.7" y="856.6" font-size="21.5" fill="#303030" textLength="51.3" lengthAdjust="spacingAndGlyphs" stroke="#303030" stroke-width=".45">Next</text>
</svg>
</body></html>
